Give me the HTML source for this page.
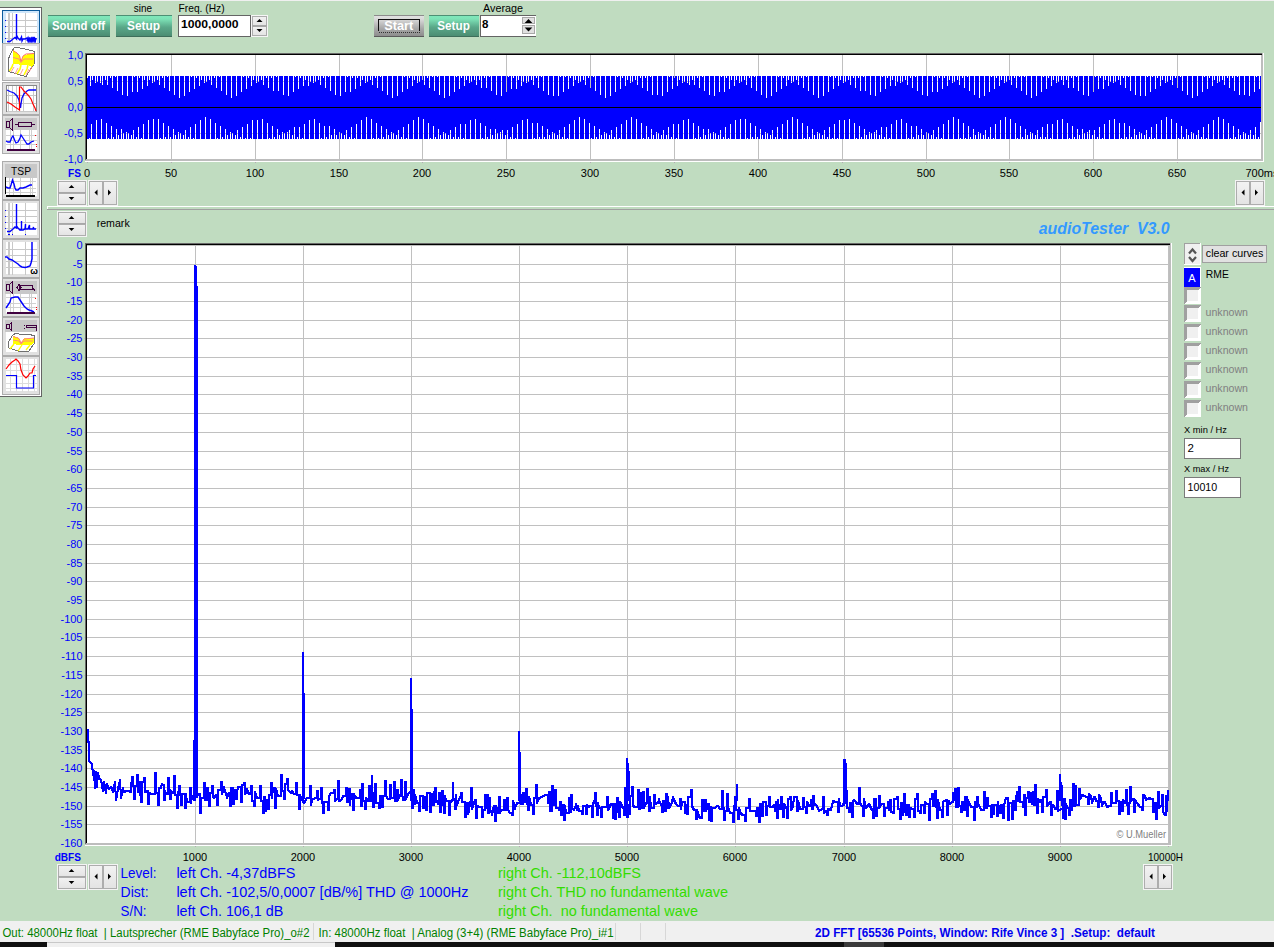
<!DOCTYPE html>
<html><head><meta charset="utf-8"><title>audioTester</title><style>html,body{margin:0;padding:0;background:#C0DCC0;overflow:hidden}svg{display:block}text{font-family:"Liberation Sans",sans-serif}</style></head><body><svg width="1274" height="947" viewBox="0 0 1274 947" shape-rendering="crispEdges" font-family="Liberation Sans, sans-serif">
<defs>
<linearGradient id="gteal" x1="0" y1="0" x2="0" y2="1">
 <stop offset="0" stop-color="#7fe9bb"/><stop offset="0.18" stop-color="#7de2b6"/><stop offset="0.55" stop-color="#5aa889"/><stop offset="1" stop-color="#4a8a70"/>
</linearGradient>
<linearGradient id="ggray" x1="0" y1="0" x2="0" y2="1">
 <stop offset="0" stop-color="#e4e4e4"/><stop offset="0.2" stop-color="#d8d8d8"/><stop offset="0.6" stop-color="#a9a9a9"/><stop offset="1" stop-color="#8a8a8a"/>
</linearGradient>
<linearGradient id="gbtn" x1="0" y1="0" x2="0" y2="1">
 <stop offset="0" stop-color="#f3f3f3"/><stop offset="1" stop-color="#e3e3e3"/>
</linearGradient>
</defs>
<rect x="0" y="0" width="1274" height="947" fill="#C0DCC0"/>
<rect x="0" y="0" width="1274" height="1" fill="#f0f0f0"/>
<rect x="48" y="15" width="62" height="22" fill="url(#gteal)"/>
<rect x="48" y="15" width="62" height="1" fill="#4d8f74"/>
<rect x="48" y="36" width="62" height="1" fill="#3e6e5a"/>
<text x="52" y="30" font-size="12" fill="#fff" font-weight="bold" textLength="53" lengthAdjust="spacingAndGlyphs" xml:space="preserve">Sound off</text>
<rect x="116" y="15" width="56" height="22" fill="url(#gteal)"/>
<rect x="116" y="15" width="56" height="1" fill="#4d8f74"/>
<rect x="116" y="36" width="56" height="1" fill="#3e6e5a"/>
<text x="127" y="30" font-size="12" fill="#fff" font-weight="bold" textLength="33" lengthAdjust="spacingAndGlyphs" xml:space="preserve">Setup</text>
<rect x="429" y="15" width="50" height="22" fill="url(#gteal)"/>
<rect x="429" y="15" width="50" height="1" fill="#4d8f74"/>
<rect x="429" y="36" width="50" height="1" fill="#3e6e5a"/>
<text x="437.3" y="30" font-size="12" fill="#fff" font-weight="bold" textLength="32.5" lengthAdjust="spacingAndGlyphs" xml:space="preserve">Setup</text>
<rect x="374" y="15" width="50" height="22" fill="url(#ggray)"/>
<rect x="374" y="15" width="50" height="1" fill="#8c8c8c"/>
<rect x="374" y="36" width="50" height="1" fill="#5a5a5a"/>
<path d="M378.5 31V19.5H419.5V31" fill="none" stroke="#111" stroke-width="1"/>
<path d="M378.5 32.5H419.5" fill="none" stroke="#333" stroke-width="1" stroke-dasharray="1,1"/>
<text x="384.2" y="30" font-size="12" fill="#fff" font-weight="bold" textLength="29" lengthAdjust="spacingAndGlyphs" xml:space="preserve">Start</text>
<text x="133.8" y="12" font-size="11" fill="#000" textLength="18.2" lengthAdjust="spacingAndGlyphs" xml:space="preserve">sine</text>
<text x="178.6" y="12" font-size="11" fill="#000" textLength="46" lengthAdjust="spacingAndGlyphs" xml:space="preserve">Freq. (Hz)</text>
<text x="483" y="12" font-size="11" fill="#000" textLength="40" lengthAdjust="spacingAndGlyphs" xml:space="preserve">Average</text>
<rect x="178" y="15" width="73" height="22" fill="#fff"/>
<rect x="178" y="15" width="73" height="1" fill="#646464"/>
<rect x="178" y="15" width="1" height="22" fill="#646464"/>
<rect x="178" y="36" width="73" height="1" fill="#646464"/>
<rect x="250" y="15" width="1" height="22" fill="#646464"/>
<text x="181" y="28" font-size="11.5" fill="#000" font-weight="bold" textLength="57.6" lengthAdjust="spacingAndGlyphs" xml:space="preserve">1000,0000</text>
<rect x="251" y="15" width="17" height="22" fill="#f6f6f6"/>
<rect x="252" y="16" width="15" height="10" fill="url(#gbtn)"/>
<rect x="252.5" y="16.5" width="14" height="9" fill="none" stroke="#adadad" stroke-width="1"/>
<rect x="252" y="26" width="15" height="10" fill="url(#gbtn)"/>
<rect x="252.5" y="26.5" width="14" height="9" fill="none" stroke="#adadad" stroke-width="1"/>
<rect x="252" y="25" width="15" height="1" fill="#a8a8a8"/>
<rect x="252" y="26" width="15" height="1" fill="#a8a8a8"/>
<polygon points="256.5,22.0 262.5,22.0 259.5,19.0" fill="#000" shape-rendering="geometricPrecision"/>
<polygon points="256.5,29.0 262.5,29.0 259.5,32.0" fill="#000" shape-rendering="geometricPrecision"/>
<rect x="480" y="15" width="56" height="22" fill="#fff"/>
<rect x="480" y="15" width="56" height="1" fill="#646464"/>
<rect x="480" y="15" width="1" height="22" fill="#646464"/>
<rect x="480" y="36" width="56" height="1" fill="#646464"/>
<rect x="522" y="17" width="13" height="7" fill="#e0e0e0"/>
<rect x="522.5" y="17.5" width="12" height="6" fill="none" stroke="#a8a8a8" stroke-width="1"/>
<rect x="522" y="25" width="13" height="9" fill="#e0e0e0"/>
<rect x="522.5" y="25.5" width="12" height="8" fill="none" stroke="#a8a8a8" stroke-width="1"/>
<polygon points="524.7,22.9 532.3,22.9 528.5,19.1" fill="#000" shape-rendering="geometricPrecision"/>
<polygon points="524.7,27.6 532.3,27.6 528.5,31.4" fill="#000" shape-rendering="geometricPrecision"/>
<text x="482" y="28" font-size="11.5" fill="#000" font-weight="bold" xml:space="preserve">8</text>
<rect x="85" y="53" width="1179" height="109" fill="#fff"/>
<rect x="85" y="53" width="1178" height="1" fill="#696969"/>
<rect x="85" y="53" width="1" height="108" fill="#696969"/>
<rect x="86" y="54" width="1177" height="1" fill="#000"/>
<rect x="86" y="54" width="1" height="107" fill="#000"/>
<rect x="1261" y="55" width="1" height="106" fill="#bdbdbd"/>
<rect x="1262" y="53" width="1" height="108" fill="#bdbdbd"/>
<rect x="86" y="159" width="1177" height="1" fill="#bdbdbd"/>
<rect x="85" y="160" width="1178" height="1" fill="#bdbdbd"/>
<rect x="1263" y="53" width="1" height="109" fill="#fff"/>
<rect x="85" y="161" width="1179" height="1" fill="#fff"/>
<rect x="171" y="55" width="1" height="104" fill="#c0c0c0"/>
<rect x="255" y="55" width="1" height="104" fill="#c0c0c0"/>
<rect x="339" y="55" width="1" height="104" fill="#c0c0c0"/>
<rect x="422" y="55" width="1" height="104" fill="#c0c0c0"/>
<rect x="506" y="55" width="1" height="104" fill="#c0c0c0"/>
<rect x="590" y="55" width="1" height="104" fill="#c0c0c0"/>
<rect x="674" y="55" width="1" height="104" fill="#c0c0c0"/>
<rect x="758" y="55" width="1" height="104" fill="#c0c0c0"/>
<rect x="842" y="55" width="1" height="104" fill="#c0c0c0"/>
<rect x="926" y="55" width="1" height="104" fill="#c0c0c0"/>
<rect x="1009" y="55" width="1" height="104" fill="#c0c0c0"/>
<rect x="1093" y="55" width="1" height="104" fill="#c0c0c0"/>
<rect x="1177" y="55" width="1" height="104" fill="#c0c0c0"/>
<rect x="87" y="81" width="1174" height="1" fill="#c0c0c0"/>
<rect x="87" y="133" width="1174" height="1" fill="#c0c0c0"/>
<path d="M87.5 78V139M88.5 76V139M89.5 76V138M90.5 86V139M91.5 76V124M92.5 80V139M93.5 76V139M94.5 76V139M95.5 83V139M96.5 76V120M97.5 82V139M98.5 76V139M99.5 76V139M100.5 83V139M101.5 76V119M102.5 85V139M103.5 76V139M104.5 76V139M105.5 80V139M106.5 76V123M107.5 85V139M108.5 76V138M109.5 76V139M110.5 78V139M111.5 76V126M112.5 88V139M113.5 76V137M114.5 76V139M115.5 77V139M116.5 76V129M117.5 91V139M118.5 76V135M119.5 76V139M120.5 76V139M121.5 76V129M122.5 95V139M123.5 76V133M124.5 76V139M125.5 76V139M126.5 76V132M127.5 96V139M128.5 76V133M129.5 76V139M130.5 76V139M131.5 76V135M132.5 92V139M133.5 76V130M134.5 77V139M135.5 76V139M136.5 76V137M137.5 92V139M138.5 76V127M139.5 78V139M140.5 76V139M141.5 76V138M142.5 89V139M143.5 76V124M144.5 80V139M145.5 76V139M146.5 76V139M147.5 86V139M148.5 76V120M149.5 80V139M150.5 76V139M151.5 76V139M152.5 83V139M153.5 76V119M154.5 82V139M155.5 76V139M156.5 76V139M157.5 80V139M158.5 76V119M159.5 85V139M160.5 76V138M161.5 76V139M162.5 78V139M163.5 76V123M164.5 88V139M165.5 76V137M166.5 76V139M167.5 77V139M168.5 76V126M169.5 91V139M170.5 76V137M171.5 76V139M172.5 76V139M173.5 76V129M174.5 95V139M175.5 76V135M176.5 76V139M177.5 76V139M178.5 76V132M179.5 98V139M180.5 76V133M181.5 76V139M182.5 76V139M183.5 76V135M184.5 96V139M185.5 76V130M186.5 76V139M187.5 76V139M188.5 76V137M189.5 92V139M190.5 76V127M191.5 77V139M192.5 76V139M193.5 76V138M194.5 89V139M195.5 76V124M196.5 78V139M197.5 76V139M198.5 76V139M199.5 86V139M200.5 76V120M201.5 80V139M202.5 76V139M203.5 76V139M204.5 83V139M205.5 76V117M206.5 82V139M207.5 76V139M208.5 76V139M209.5 80V139M210.5 76V119M211.5 85V139M212.5 76V139M213.5 76V139M214.5 78V139M215.5 76V123M216.5 88V139M217.5 76V138M218.5 76V139M219.5 77V139M220.5 76V126M221.5 91V139M222.5 76V137M223.5 76V139M224.5 76V139M225.5 76V129M226.5 95V139M227.5 76V135M228.5 76V139M229.5 76V139M230.5 76V132M231.5 98V139M232.5 76V133M233.5 76V139M234.5 76V139M235.5 76V135M236.5 96V139M237.5 76V130M238.5 76V139M239.5 76V139M240.5 76V137M241.5 92V139M242.5 76V127M243.5 77V139M244.5 76V139M245.5 76V138M246.5 89V139M247.5 76V124M248.5 78V139M249.5 76V139M250.5 76V138M251.5 86V139M252.5 76V120M253.5 80V139M254.5 76V139M255.5 76V139M256.5 83V139M257.5 76V120M258.5 82V139M259.5 76V139M260.5 76V139M261.5 80V139M262.5 76V119M263.5 85V139M264.5 76V139M265.5 76V139M266.5 78V139M267.5 76V123M268.5 88V139M269.5 76V138M270.5 76V139M271.5 78V139M272.5 76V126M273.5 91V139M274.5 76V137M275.5 76V139M276.5 77V139M277.5 76V129M278.5 91V139M279.5 76V135M280.5 76V139M281.5 76V139M282.5 76V132M283.5 95V139M284.5 76V133M285.5 76V139M286.5 76V139M287.5 76V132M288.5 96V139M289.5 76V130M290.5 76V139M291.5 76V139M292.5 76V135M293.5 92V139M294.5 76V127M295.5 77V139M296.5 76V139M297.5 76V137M298.5 89V139M299.5 76V127M300.5 78V139M301.5 76V139M302.5 76V138M303.5 86V139M304.5 76V124M305.5 80V139M306.5 76V139M307.5 76V139M308.5 86V139M309.5 76V120M310.5 82V139M311.5 76V139M312.5 76V139M313.5 83V139M314.5 76V119M315.5 82V139M316.5 76V139M317.5 76V139M318.5 80V139M319.5 76V123M320.5 85V139M321.5 76V138M322.5 76V139M323.5 78V139M324.5 76V126M325.5 88V139M326.5 76V137M327.5 76V139M328.5 77V139M329.5 76V126M330.5 91V139M331.5 76V135M332.5 76V139M333.5 76V139M334.5 76V129M335.5 95V139M336.5 76V135M337.5 76V139M338.5 76V139M339.5 76V132M340.5 96V139M341.5 76V133M342.5 76V139M343.5 76V139M344.5 76V135M345.5 92V139M346.5 76V130M347.5 77V139M348.5 76V139M349.5 76V137M350.5 92V139M351.5 76V127M352.5 78V139M353.5 76V139M354.5 76V138M355.5 89V139M356.5 76V124M357.5 78V139M358.5 76V139M359.5 76V139M360.5 86V139M361.5 76V120M362.5 80V139M363.5 76V139M364.5 76V139M365.5 83V139M366.5 76V117M367.5 82V139M368.5 76V139M369.5 76V139M370.5 80V139M371.5 76V119M372.5 85V139M373.5 76V138M374.5 76V139M375.5 78V139M376.5 76V123M377.5 88V139M378.5 76V138M379.5 76V139M380.5 77V139M381.5 76V126M382.5 91V139M383.5 76V137M384.5 76V139M385.5 76V139M386.5 76V129M387.5 95V139M388.5 76V135M389.5 76V139M390.5 76V139M391.5 76V132M392.5 98V139M393.5 76V133M394.5 76V139M395.5 76V139M396.5 76V135M397.5 96V139M398.5 76V130M399.5 76V139M400.5 76V139M401.5 76V137M402.5 92V139M403.5 76V127M404.5 77V139M405.5 76V139M406.5 76V138M407.5 89V139M408.5 76V124M409.5 78V139M410.5 76V139M411.5 76V139M412.5 86V139M413.5 76V120M414.5 80V139M415.5 76V139M416.5 76V139M417.5 83V139M418.5 76V117M419.5 82V139M420.5 76V139M421.5 76V139M422.5 80V139M423.5 76V119M424.5 85V139M425.5 76V139M426.5 76V139M427.5 78V139M428.5 76V123M429.5 88V139M430.5 76V138M431.5 76V139M432.5 77V139M433.5 76V126M434.5 91V139M435.5 76V137M436.5 76V139M437.5 77V139M438.5 76V129M439.5 95V139M440.5 76V135M441.5 76V139M442.5 76V139M443.5 76V132M444.5 98V139M445.5 76V133M446.5 76V139M447.5 76V139M448.5 76V135M449.5 96V139M450.5 76V130M451.5 76V139M452.5 76V139M453.5 76V137M454.5 92V139M455.5 76V127M456.5 77V139M457.5 76V139M458.5 76V137M459.5 89V139M460.5 76V124M461.5 78V139M462.5 76V139M463.5 76V138M464.5 86V139M465.5 76V124M466.5 80V139M467.5 76V139M468.5 76V139M469.5 83V139M470.5 76V120M471.5 82V139M472.5 76V139M473.5 76V139M474.5 80V139M475.5 76V119M476.5 85V139M477.5 76V139M478.5 76V139M479.5 80V139M480.5 76V123M481.5 88V139M482.5 76V138M483.5 76V139M484.5 78V139M485.5 76V126M486.5 88V139M487.5 76V137M488.5 76V139M489.5 77V139M490.5 76V129M491.5 91V139M492.5 76V135M493.5 76V139M494.5 76V139M495.5 76V129M496.5 95V139M497.5 76V133M498.5 76V139M499.5 76V139M500.5 76V132M501.5 96V139M502.5 76V130M503.5 76V139M504.5 76V139M505.5 76V135M506.5 92V139M507.5 76V130M508.5 77V139M509.5 76V139M510.5 76V137M511.5 89V139M512.5 76V127M513.5 78V139M514.5 76V139M515.5 76V138M516.5 89V139M517.5 76V124M518.5 80V139M519.5 76V139M520.5 76V139M521.5 86V139M522.5 76V120M523.5 82V139M524.5 76V139M525.5 76V139M526.5 83V139M527.5 76V119M528.5 82V139M529.5 76V139M530.5 76V139M531.5 80V139M532.5 76V123M533.5 85V139M534.5 76V138M535.5 76V139M536.5 78V139M537.5 76V123M538.5 88V139M539.5 76V137M540.5 76V139M541.5 77V139M542.5 76V126M543.5 91V139M544.5 76V137M545.5 76V139M546.5 76V139M547.5 76V129M548.5 95V139M549.5 76V135M550.5 76V139M551.5 76V139M552.5 76V132M553.5 96V139M554.5 76V133M555.5 76V139M556.5 76V139M557.5 76V135M558.5 96V139M559.5 76V130M560.5 77V139M561.5 76V139M562.5 76V137M563.5 92V139M564.5 76V127M565.5 77V139M566.5 76V139M567.5 76V138M568.5 89V139M569.5 76V124M570.5 78V139M571.5 76V139M572.5 76V139M573.5 86V139M574.5 76V120M575.5 80V139M576.5 76V139M577.5 76V139M578.5 83V139M579.5 76V117M580.5 82V139M581.5 76V139M582.5 76V139M583.5 80V139M584.5 76V119M585.5 85V139M586.5 76V139M587.5 76V139M588.5 78V139M589.5 76V123M590.5 88V139M591.5 76V138M592.5 76V139M593.5 77V139M594.5 76V126M595.5 91V139M596.5 76V137M597.5 76V139M598.5 76V139M599.5 76V129M600.5 95V139M601.5 76V135M602.5 76V139M603.5 76V139M604.5 76V132M605.5 98V139M606.5 76V133M607.5 76V139M608.5 76V139M609.5 76V135M610.5 96V139M611.5 76V130M612.5 76V139M613.5 76V139M614.5 76V137M615.5 92V139M616.5 76V127M617.5 77V139M618.5 76V139M619.5 76V138M620.5 89V139M621.5 76V124M622.5 78V139M623.5 76V139M624.5 76V139M625.5 86V139M626.5 76V120M627.5 80V139M628.5 76V139M629.5 76V139M630.5 83V139M631.5 76V117M632.5 82V139M633.5 76V139M634.5 76V139M635.5 80V139M636.5 76V119M637.5 85V139M638.5 76V139M639.5 76V139M640.5 78V139M641.5 76V123M642.5 88V139M643.5 76V138M644.5 76V139M645.5 78V139M646.5 76V126M647.5 91V139M648.5 76V137M649.5 76V139M650.5 77V139M651.5 76V129M652.5 95V139M653.5 76V135M654.5 76V139M655.5 76V139M656.5 76V132M657.5 95V139M658.5 76V133M659.5 76V139M660.5 76V139M661.5 76V135M662.5 96V139M663.5 76V130M664.5 76V139M665.5 76V139M666.5 76V135M667.5 92V139M668.5 76V127M669.5 77V139M670.5 76V139M671.5 76V137M672.5 89V139M673.5 76V124M674.5 78V139M675.5 76V139M676.5 76V138M677.5 86V139M678.5 76V124M679.5 80V139M680.5 76V139M681.5 76V139M682.5 83V139M683.5 76V120M684.5 82V139M685.5 76V139M686.5 76V139M687.5 83V139M688.5 76V119M689.5 85V139M690.5 76V139M691.5 76V139M692.5 80V139M693.5 76V123M694.5 85V139M695.5 76V138M696.5 76V139M697.5 78V139M698.5 76V126M699.5 88V139M700.5 76V137M701.5 76V139M702.5 77V139M703.5 76V129M704.5 91V139M705.5 76V135M706.5 76V139M707.5 76V139M708.5 76V129M709.5 95V139M710.5 76V133M711.5 76V139M712.5 76V139M713.5 76V132M714.5 96V139M715.5 76V133M716.5 76V139M717.5 76V139M718.5 76V135M719.5 92V139M720.5 76V130M721.5 77V139M722.5 76V139M723.5 76V137M724.5 92V139M725.5 76V127M726.5 78V139M727.5 76V139M728.5 76V138M729.5 89V139M730.5 76V124M731.5 80V139M732.5 76V139M733.5 76V139M734.5 86V139M735.5 76V120M736.5 80V139M737.5 76V139M738.5 76V139M739.5 83V139M740.5 76V119M741.5 82V139M742.5 76V139M743.5 76V139M744.5 80V139M745.5 76V119M746.5 85V139M747.5 76V138M748.5 76V139M749.5 78V139M750.5 76V123M751.5 88V139M752.5 76V137M753.5 76V139M754.5 77V139M755.5 76V126M756.5 91V139M757.5 76V137M758.5 76V139M759.5 76V139M760.5 76V129M761.5 95V139M762.5 76V135M763.5 76V139M764.5 76V139M765.5 76V132M766.5 98V139M767.5 76V133M768.5 76V139M769.5 76V139M770.5 76V135M771.5 96V139M772.5 76V130M773.5 76V139M774.5 76V139M775.5 76V137M776.5 92V139M777.5 76V127M778.5 77V139M779.5 76V139M780.5 76V138M781.5 89V139M782.5 76V124M783.5 78V139M784.5 76V139M785.5 76V139M786.5 86V139M787.5 76V120M788.5 80V139M789.5 76V139M790.5 76V139M791.5 83V139M792.5 76V117M793.5 82V139M794.5 76V139M795.5 76V139M796.5 80V139M797.5 76V119M798.5 85V139M799.5 76V139M800.5 76V139M801.5 78V139M802.5 76V123M803.5 88V139M804.5 76V138M805.5 76V139M806.5 77V139M807.5 76V126M808.5 91V139M809.5 76V137M810.5 76V139M811.5 76V139M812.5 76V129M813.5 95V139M814.5 76V135M815.5 76V139M816.5 76V139M817.5 76V132M818.5 98V139M819.5 76V133M820.5 76V139M821.5 76V139M822.5 76V135M823.5 96V139M824.5 76V130M825.5 76V139M826.5 76V139M827.5 76V137M828.5 92V139M829.5 76V127M830.5 77V139M831.5 76V139M832.5 76V138M833.5 89V139M834.5 76V124M835.5 78V139M836.5 76V139M837.5 76V138M838.5 86V139M839.5 76V120M840.5 80V139M841.5 76V139M842.5 76V139M843.5 83V139M844.5 76V120M845.5 82V139M846.5 76V139M847.5 76V139M848.5 80V139M849.5 76V119M850.5 85V139M851.5 76V139M852.5 76V139M853.5 78V139M854.5 76V123M855.5 88V139M856.5 76V138M857.5 76V139M858.5 78V139M859.5 76V126M860.5 91V139M861.5 76V137M862.5 76V139M863.5 77V139M864.5 76V129M865.5 91V139M866.5 76V135M867.5 76V139M868.5 76V139M869.5 76V132M870.5 95V139M871.5 76V133M872.5 76V139M873.5 76V139M874.5 76V132M875.5 96V139M876.5 76V130M877.5 76V139M878.5 76V139M879.5 76V135M880.5 92V139M881.5 76V127M882.5 77V139M883.5 76V139M884.5 76V137M885.5 89V139M886.5 76V127M887.5 78V139M888.5 76V139M889.5 76V138M890.5 86V139M891.5 76V124M892.5 80V139M893.5 76V139M894.5 76V139M895.5 86V139M896.5 76V120M897.5 82V139M898.5 76V139M899.5 76V139M900.5 83V139M901.5 76V119M902.5 82V139M903.5 76V139M904.5 76V139M905.5 80V139M906.5 76V123M907.5 85V139M908.5 76V138M909.5 76V139M910.5 78V139M911.5 76V126M912.5 88V139M913.5 76V137M914.5 76V139M915.5 77V139M916.5 76V126M917.5 91V139M918.5 76V135M919.5 76V139M920.5 76V139M921.5 76V129M922.5 95V139M923.5 76V135M924.5 76V139M925.5 76V139M926.5 76V132M927.5 96V139M928.5 76V133M929.5 76V139M930.5 76V139M931.5 76V135M932.5 92V139M933.5 76V130M934.5 77V139M935.5 76V139M936.5 76V137M937.5 92V139M938.5 76V127M939.5 78V139M940.5 76V139M941.5 76V138M942.5 89V139M943.5 76V124M944.5 78V139M945.5 76V139M946.5 76V139M947.5 86V139M948.5 76V120M949.5 80V139M950.5 76V139M951.5 76V139M952.5 83V139M953.5 76V117M954.5 82V139M955.5 76V139M956.5 76V139M957.5 80V139M958.5 76V119M959.5 85V139M960.5 76V138M961.5 76V139M962.5 78V139M963.5 76V123M964.5 88V139M965.5 76V138M966.5 76V139M967.5 77V139M968.5 76V126M969.5 91V139M970.5 76V137M971.5 76V139M972.5 76V139M973.5 76V129M974.5 95V139M975.5 76V135M976.5 76V139M977.5 76V139M978.5 76V132M979.5 98V139M980.5 76V133M981.5 76V139M982.5 76V139M983.5 76V135M984.5 96V139M985.5 76V130M986.5 76V139M987.5 76V139M988.5 76V137M989.5 92V139M990.5 76V127M991.5 77V139M992.5 76V139M993.5 76V138M994.5 89V139M995.5 76V124M996.5 78V139M997.5 76V139M998.5 76V139M999.5 86V139M1000.5 76V120M1001.5 80V139M1002.5 76V139M1003.5 76V139M1004.5 83V139M1005.5 76V117M1006.5 82V139M1007.5 76V139M1008.5 76V139M1009.5 80V139M1010.5 76V119M1011.5 85V139M1012.5 76V139M1013.5 76V139M1014.5 78V139M1015.5 76V123M1016.5 88V139M1017.5 76V138M1018.5 76V139M1019.5 77V139M1020.5 76V126M1021.5 91V139M1022.5 76V137M1023.5 76V139M1024.5 77V139M1025.5 76V129M1026.5 95V139M1027.5 76V135M1028.5 76V139M1029.5 76V139M1030.5 76V132M1031.5 98V139M1032.5 76V133M1033.5 76V139M1034.5 76V139M1035.5 76V135M1036.5 96V139M1037.5 76V130M1038.5 76V139M1039.5 76V139M1040.5 76V137M1041.5 92V139M1042.5 76V127M1043.5 77V139M1044.5 76V139M1045.5 76V137M1046.5 89V139M1047.5 76V124M1048.5 78V139M1049.5 76V139M1050.5 76V138M1051.5 86V139M1052.5 76V124M1053.5 80V139M1054.5 76V139M1055.5 76V139M1056.5 83V139M1057.5 76V120M1058.5 82V139M1059.5 76V139M1060.5 76V139M1061.5 80V139M1062.5 76V119M1063.5 85V139M1064.5 76V139M1065.5 76V139M1066.5 80V139M1067.5 76V123M1068.5 88V139M1069.5 76V138M1070.5 76V139M1071.5 78V139M1072.5 76V126M1073.5 88V139M1074.5 76V137M1075.5 76V139M1076.5 77V139M1077.5 76V129M1078.5 91V139M1079.5 76V135M1080.5 76V139M1081.5 76V139M1082.5 76V129M1083.5 95V139M1084.5 76V133M1085.5 76V139M1086.5 76V139M1087.5 76V132M1088.5 96V139M1089.5 76V130M1090.5 76V139M1091.5 76V139M1092.5 76V135M1093.5 92V139M1094.5 76V130M1095.5 77V139M1096.5 76V139M1097.5 76V137M1098.5 89V139M1099.5 76V127M1100.5 78V139M1101.5 76V139M1102.5 76V138M1103.5 89V139M1104.5 76V124M1105.5 80V139M1106.5 76V139M1107.5 76V139M1108.5 86V139M1109.5 76V120M1110.5 82V139M1111.5 76V139M1112.5 76V139M1113.5 83V139M1114.5 76V119M1115.5 82V139M1116.5 76V139M1117.5 76V139M1118.5 80V139M1119.5 76V123M1120.5 85V139M1121.5 76V138M1122.5 76V139M1123.5 78V139M1124.5 76V123M1125.5 88V139M1126.5 76V137M1127.5 76V139M1128.5 77V139M1129.5 76V126M1130.5 91V139M1131.5 76V137M1132.5 76V139M1133.5 76V139M1134.5 76V129M1135.5 95V139M1136.5 76V135M1137.5 76V139M1138.5 76V139M1139.5 76V132M1140.5 96V139M1141.5 76V133M1142.5 76V139M1143.5 76V139M1144.5 76V135M1145.5 96V139M1146.5 76V130M1147.5 77V139M1148.5 76V139M1149.5 76V137M1150.5 92V139M1151.5 76V127M1152.5 77V139M1153.5 76V139M1154.5 76V138M1155.5 89V139M1156.5 76V124M1157.5 78V139M1158.5 76V139M1159.5 76V139M1160.5 86V139M1161.5 76V120M1162.5 80V139M1163.5 76V139M1164.5 76V139M1165.5 83V139M1166.5 76V117M1167.5 82V139M1168.5 76V139M1169.5 76V139M1170.5 80V139M1171.5 76V119M1172.5 85V139M1173.5 76V139M1174.5 76V139M1175.5 78V139M1176.5 76V123M1177.5 88V139M1178.5 76V138M1179.5 76V139M1180.5 77V139M1181.5 76V126M1182.5 91V139M1183.5 76V137M1184.5 76V139M1185.5 76V139M1186.5 76V129M1187.5 95V139M1188.5 76V135M1189.5 76V139M1190.5 76V139M1191.5 76V132M1192.5 98V139M1193.5 76V133M1194.5 76V139M1195.5 76V139M1196.5 76V135M1197.5 96V139M1198.5 76V130M1199.5 76V139M1200.5 76V139M1201.5 76V137M1202.5 92V139M1203.5 76V127M1204.5 77V139M1205.5 76V139M1206.5 76V138M1207.5 89V139M1208.5 76V124M1209.5 78V139M1210.5 76V139M1211.5 76V139M1212.5 86V139M1213.5 76V120M1214.5 80V139M1215.5 76V139M1216.5 76V139M1217.5 83V139M1218.5 76V117M1219.5 82V139M1220.5 76V139M1221.5 76V139M1222.5 80V139M1223.5 76V119M1224.5 85V139M1225.5 76V139M1226.5 76V139M1227.5 78V139M1228.5 76V123M1229.5 88V139M1230.5 76V138M1231.5 76V139M1232.5 78V139M1233.5 76V126M1234.5 91V139M1235.5 76V137M1236.5 76V139M1237.5 77V139M1238.5 76V129M1239.5 95V139M1240.5 76V135M1241.5 76V139M1242.5 76V139M1243.5 76V132M1244.5 95V139M1245.5 76V133M1246.5 76V139M1247.5 76V139M1248.5 76V135M1249.5 96V139M1250.5 76V130M1251.5 76V139M1252.5 76V139M1253.5 76V135M1254.5 92V139M1255.5 76V127M1256.5 77V139M1257.5 76V139M1258.5 76V137M1259.5 89V139M1260.5 76V122" stroke="#0000ff" stroke-width="1" fill="none"/>
<rect x="87" y="107" width="1174" height="1" fill="#000"/>
<text x="83" y="59" font-size="11" fill="#0000ff" text-anchor="end" xml:space="preserve">1,0</text>
<text x="83" y="85" font-size="11" fill="#0000ff" text-anchor="end" xml:space="preserve">0,5</text>
<text x="83" y="111" font-size="11" fill="#0000ff" text-anchor="end" xml:space="preserve">0,0</text>
<text x="83" y="137" font-size="11" fill="#0000ff" text-anchor="end" xml:space="preserve">-0,5</text>
<text x="83" y="163" font-size="11" fill="#0000ff" text-anchor="end" xml:space="preserve">-1,0</text>
<text x="68" y="177" font-size="11" fill="#0000ff" font-weight="bold" textLength="13" lengthAdjust="spacingAndGlyphs" xml:space="preserve">FS</text>
<text x="87" y="177" font-size="11" fill="#000" text-anchor="middle" xml:space="preserve">0</text>
<text x="171" y="177" font-size="11" fill="#000" text-anchor="middle" xml:space="preserve">50</text>
<text x="255" y="177" font-size="11" fill="#000" text-anchor="middle" xml:space="preserve">100</text>
<text x="339" y="177" font-size="11" fill="#000" text-anchor="middle" xml:space="preserve">150</text>
<text x="422" y="177" font-size="11" fill="#000" text-anchor="middle" xml:space="preserve">200</text>
<text x="506" y="177" font-size="11" fill="#000" text-anchor="middle" xml:space="preserve">250</text>
<text x="590" y="177" font-size="11" fill="#000" text-anchor="middle" xml:space="preserve">300</text>
<text x="674" y="177" font-size="11" fill="#000" text-anchor="middle" xml:space="preserve">350</text>
<text x="758" y="177" font-size="11" fill="#000" text-anchor="middle" xml:space="preserve">400</text>
<text x="842" y="177" font-size="11" fill="#000" text-anchor="middle" xml:space="preserve">450</text>
<text x="926" y="177" font-size="11" fill="#000" text-anchor="middle" xml:space="preserve">500</text>
<text x="1009" y="177" font-size="11" fill="#000" text-anchor="middle" xml:space="preserve">550</text>
<text x="1093" y="177" font-size="11" fill="#000" text-anchor="middle" xml:space="preserve">600</text>
<text x="1177" y="177" font-size="11" fill="#000" text-anchor="middle" xml:space="preserve">650</text>
<text x="1245.5" y="177" font-size="11" fill="#000" xml:space="preserve">700ms</text>
<rect x="57" y="180" width="30" height="26" fill="#f4f4f4"/>
<rect x="58" y="181" width="28" height="12" fill="url(#gbtn)"/>
<rect x="58.5" y="181.5" width="27" height="11" fill="none" stroke="#adadad" stroke-width="1"/>
<rect x="58" y="193" width="28" height="12" fill="url(#gbtn)"/>
<rect x="58.5" y="193.5" width="27" height="11" fill="none" stroke="#adadad" stroke-width="1"/>
<rect x="58" y="192" width="28" height="1" fill="#a8a8a8"/>
<polygon points="68.7,187.9 74.3,187.9 71.5,185.1" fill="#000" shape-rendering="geometricPrecision"/>
<polygon points="68.7,197.1 74.3,197.1 71.5,199.9" fill="#000" shape-rendering="geometricPrecision"/>
<rect x="88" y="180" width="30" height="26" fill="#f4f4f4"/>
<rect x="89" y="181" width="14" height="24" fill="url(#gbtn)"/>
<rect x="89.5" y="181.5" width="13" height="23" fill="none" stroke="#adadad" stroke-width="1"/>
<rect x="103" y="181" width="14" height="24" fill="url(#gbtn)"/>
<rect x="103.5" y="181.5" width="13" height="23" fill="none" stroke="#adadad" stroke-width="1"/>
<polygon points="97.5,189.5 97.5,195.5 94.5,192.5" fill="#000" shape-rendering="geometricPrecision"/>
<polygon points="108.0,189.5 108.0,195.5 111.0,192.5" fill="#000" shape-rendering="geometricPrecision"/>
<rect x="1235" y="180" width="30" height="26" fill="#f4f4f4"/>
<rect x="1236" y="181" width="14" height="24" fill="url(#gbtn)"/>
<rect x="1236.5" y="181.5" width="13" height="23" fill="none" stroke="#adadad" stroke-width="1"/>
<rect x="1250" y="181" width="14" height="24" fill="url(#gbtn)"/>
<rect x="1250.5" y="181.5" width="13" height="23" fill="none" stroke="#adadad" stroke-width="1"/>
<polygon points="1244.5,189.5 1244.5,195.5 1241.5,192.5" fill="#000" shape-rendering="geometricPrecision"/>
<polygon points="1255.0,189.5 1255.0,195.5 1258.0,192.5" fill="#000" shape-rendering="geometricPrecision"/>
<rect x="47" y="206" width="1227" height="1" fill="#ffffff"/>
<rect x="47" y="206" width="1" height="3" fill="#ffffff"/>
<rect x="47" y="209" width="1227" height="1" fill="#a0a0a0"/>
<rect x="57" y="211" width="30" height="26" fill="#f4f4f4"/>
<rect x="58" y="212" width="28" height="12" fill="url(#gbtn)"/>
<rect x="58.5" y="212.5" width="27" height="11" fill="none" stroke="#adadad" stroke-width="1"/>
<rect x="58" y="224" width="28" height="12" fill="url(#gbtn)"/>
<rect x="58.5" y="224.5" width="27" height="11" fill="none" stroke="#adadad" stroke-width="1"/>
<rect x="58" y="223" width="28" height="1" fill="#a8a8a8"/>
<polygon points="68.7,218.9 74.3,218.9 71.5,216.1" fill="#000" shape-rendering="geometricPrecision"/>
<polygon points="68.7,228.1 74.3,228.1 71.5,230.9" fill="#000" shape-rendering="geometricPrecision"/>
<text x="96.7" y="227" font-size="11" fill="#000" textLength="33" lengthAdjust="spacingAndGlyphs" xml:space="preserve">remark</text>
<text x="1038.8" y="233.6" font-size="16" fill="#3399ff" font-weight="bold" font-style="italic" textLength="130.8" lengthAdjust="spacingAndGlyphs" xml:space="preserve">audioTester  V3.0</text>
<rect x="85" y="243" width="1087" height="603" fill="#fff"/>
<rect x="85" y="243" width="1086" height="1" fill="#696969"/>
<rect x="85" y="243" width="1" height="602" fill="#696969"/>
<rect x="86" y="244" width="1085" height="1" fill="#000"/>
<rect x="86" y="244" width="1" height="601" fill="#000"/>
<rect x="1169" y="245" width="1" height="600" fill="#bdbdbd"/>
<rect x="1170" y="243" width="1" height="602" fill="#bdbdbd"/>
<rect x="86" y="843" width="1085" height="1" fill="#bdbdbd"/>
<rect x="85" y="844" width="1086" height="1" fill="#bdbdbd"/>
<rect x="1171" y="243" width="1" height="603" fill="#fff"/>
<rect x="85" y="845" width="1087" height="1" fill="#fff"/>
<rect x="87" y="245" width="1082" height="1" fill="#c0c0c0"/>
<rect x="87" y="264" width="1082" height="1" fill="#c0c0c0"/>
<rect x="87" y="282" width="1082" height="1" fill="#c0c0c0"/>
<rect x="87" y="301" width="1082" height="1" fill="#c0c0c0"/>
<rect x="87" y="320" width="1082" height="1" fill="#c0c0c0"/>
<rect x="87" y="338" width="1082" height="1" fill="#c0c0c0"/>
<rect x="87" y="357" width="1082" height="1" fill="#c0c0c0"/>
<rect x="87" y="376" width="1082" height="1" fill="#c0c0c0"/>
<rect x="87" y="394" width="1082" height="1" fill="#c0c0c0"/>
<rect x="87" y="413" width="1082" height="1" fill="#c0c0c0"/>
<rect x="87" y="432" width="1082" height="1" fill="#c0c0c0"/>
<rect x="87" y="451" width="1082" height="1" fill="#c0c0c0"/>
<rect x="87" y="469" width="1082" height="1" fill="#c0c0c0"/>
<rect x="87" y="488" width="1082" height="1" fill="#c0c0c0"/>
<rect x="87" y="507" width="1082" height="1" fill="#c0c0c0"/>
<rect x="87" y="525" width="1082" height="1" fill="#c0c0c0"/>
<rect x="87" y="544" width="1082" height="1" fill="#c0c0c0"/>
<rect x="87" y="563" width="1082" height="1" fill="#c0c0c0"/>
<rect x="87" y="581" width="1082" height="1" fill="#c0c0c0"/>
<rect x="87" y="600" width="1082" height="1" fill="#c0c0c0"/>
<rect x="87" y="619" width="1082" height="1" fill="#c0c0c0"/>
<rect x="87" y="637" width="1082" height="1" fill="#c0c0c0"/>
<rect x="87" y="656" width="1082" height="1" fill="#c0c0c0"/>
<rect x="87" y="675" width="1082" height="1" fill="#c0c0c0"/>
<rect x="87" y="694" width="1082" height="1" fill="#c0c0c0"/>
<rect x="87" y="712" width="1082" height="1" fill="#c0c0c0"/>
<rect x="87" y="731" width="1082" height="1" fill="#c0c0c0"/>
<rect x="87" y="750" width="1082" height="1" fill="#c0c0c0"/>
<rect x="87" y="768" width="1082" height="1" fill="#c0c0c0"/>
<rect x="87" y="787" width="1082" height="1" fill="#c0c0c0"/>
<rect x="87" y="806" width="1082" height="1" fill="#c0c0c0"/>
<rect x="87" y="824" width="1082" height="1" fill="#c0c0c0"/>
<rect x="195" y="245" width="1" height="598" fill="#c0c0c0"/>
<rect x="303" y="245" width="1" height="598" fill="#c0c0c0"/>
<rect x="411" y="245" width="1" height="598" fill="#c0c0c0"/>
<rect x="519" y="245" width="1" height="598" fill="#c0c0c0"/>
<rect x="627" y="245" width="1" height="598" fill="#c0c0c0"/>
<rect x="735" y="245" width="1" height="598" fill="#c0c0c0"/>
<rect x="844" y="245" width="1" height="598" fill="#c0c0c0"/>
<rect x="952" y="245" width="1" height="598" fill="#c0c0c0"/>
<rect x="1060" y="245" width="1" height="598" fill="#c0c0c0"/>
<rect x="1168" y="245" width="1" height="598" fill="#c0c0c0"/>
<text x="82.5" y="249" font-size="11" fill="#0000ff" text-anchor="end" xml:space="preserve">0</text>
<text x="82.5" y="268" font-size="11" fill="#0000ff" text-anchor="end" xml:space="preserve">-5</text>
<text x="82.5" y="286" font-size="11" fill="#0000ff" text-anchor="end" xml:space="preserve">-10</text>
<text x="82.5" y="305" font-size="11" fill="#0000ff" text-anchor="end" xml:space="preserve">-15</text>
<text x="82.5" y="324" font-size="11" fill="#0000ff" text-anchor="end" xml:space="preserve">-20</text>
<text x="82.5" y="342" font-size="11" fill="#0000ff" text-anchor="end" xml:space="preserve">-25</text>
<text x="82.5" y="361" font-size="11" fill="#0000ff" text-anchor="end" xml:space="preserve">-30</text>
<text x="82.5" y="380" font-size="11" fill="#0000ff" text-anchor="end" xml:space="preserve">-35</text>
<text x="82.5" y="398" font-size="11" fill="#0000ff" text-anchor="end" xml:space="preserve">-40</text>
<text x="82.5" y="417" font-size="11" fill="#0000ff" text-anchor="end" xml:space="preserve">-45</text>
<text x="82.5" y="436" font-size="11" fill="#0000ff" text-anchor="end" xml:space="preserve">-50</text>
<text x="82.5" y="455" font-size="11" fill="#0000ff" text-anchor="end" xml:space="preserve">-55</text>
<text x="82.5" y="473" font-size="11" fill="#0000ff" text-anchor="end" xml:space="preserve">-60</text>
<text x="82.5" y="492" font-size="11" fill="#0000ff" text-anchor="end" xml:space="preserve">-65</text>
<text x="82.5" y="511" font-size="11" fill="#0000ff" text-anchor="end" xml:space="preserve">-70</text>
<text x="82.5" y="529" font-size="11" fill="#0000ff" text-anchor="end" xml:space="preserve">-75</text>
<text x="82.5" y="548" font-size="11" fill="#0000ff" text-anchor="end" xml:space="preserve">-80</text>
<text x="82.5" y="567" font-size="11" fill="#0000ff" text-anchor="end" xml:space="preserve">-85</text>
<text x="82.5" y="585" font-size="11" fill="#0000ff" text-anchor="end" xml:space="preserve">-90</text>
<text x="82.5" y="604" font-size="11" fill="#0000ff" text-anchor="end" xml:space="preserve">-95</text>
<text x="82.5" y="623" font-size="11" fill="#0000ff" text-anchor="end" xml:space="preserve">-100</text>
<text x="82.5" y="641" font-size="11" fill="#0000ff" text-anchor="end" xml:space="preserve">-105</text>
<text x="82.5" y="660" font-size="11" fill="#0000ff" text-anchor="end" xml:space="preserve">-110</text>
<text x="82.5" y="679" font-size="11" fill="#0000ff" text-anchor="end" xml:space="preserve">-115</text>
<text x="82.5" y="698" font-size="11" fill="#0000ff" text-anchor="end" xml:space="preserve">-120</text>
<text x="82.5" y="716" font-size="11" fill="#0000ff" text-anchor="end" xml:space="preserve">-125</text>
<text x="82.5" y="735" font-size="11" fill="#0000ff" text-anchor="end" xml:space="preserve">-130</text>
<text x="82.5" y="754" font-size="11" fill="#0000ff" text-anchor="end" xml:space="preserve">-135</text>
<text x="82.5" y="772" font-size="11" fill="#0000ff" text-anchor="end" xml:space="preserve">-140</text>
<text x="82.5" y="791" font-size="11" fill="#0000ff" text-anchor="end" xml:space="preserve">-145</text>
<text x="82.5" y="810" font-size="11" fill="#0000ff" text-anchor="end" xml:space="preserve">-150</text>
<text x="82.5" y="828" font-size="11" fill="#0000ff" text-anchor="end" xml:space="preserve">-155</text>
<text x="82.5" y="847" font-size="11" fill="#0000ff" text-anchor="end" xml:space="preserve">-160</text>
<text x="195" y="861" font-size="11" fill="#000" text-anchor="middle" xml:space="preserve">1000</text>
<text x="303" y="861" font-size="11" fill="#000" text-anchor="middle" xml:space="preserve">2000</text>
<text x="411" y="861" font-size="11" fill="#000" text-anchor="middle" xml:space="preserve">3000</text>
<text x="519" y="861" font-size="11" fill="#000" text-anchor="middle" xml:space="preserve">4000</text>
<text x="627" y="861" font-size="11" fill="#000" text-anchor="middle" xml:space="preserve">5000</text>
<text x="735" y="861" font-size="11" fill="#000" text-anchor="middle" xml:space="preserve">6000</text>
<text x="844" y="861" font-size="11" fill="#000" text-anchor="middle" xml:space="preserve">7000</text>
<text x="952" y="861" font-size="11" fill="#000" text-anchor="middle" xml:space="preserve">8000</text>
<text x="1060" y="861" font-size="11" fill="#000" text-anchor="middle" xml:space="preserve">9000</text>
<text x="1148" y="861" font-size="11" fill="#000" textLength="35" lengthAdjust="spacingAndGlyphs" xml:space="preserve">10000H</text>
<text x="54.7" y="861" font-size="11" fill="#0000ff" font-weight="bold" textLength="26.3" lengthAdjust="spacingAndGlyphs" xml:space="preserve">dBFS</text>
<text x="1116.5" y="838" font-size="10.5" fill="#808080" textLength="49.5" lengthAdjust="spacingAndGlyphs" xml:space="preserve">© U.Mueller</text>
<g id="trace"><polyline points="86.5,729.5 87.5,729.5 87.5,741.5 88.5,741.5 88.5,760.5 91.5,763.5 92.5,773.5 93.5,771.5 94.5,787.5 95.5,771.5 96.5,786.5 97.5,772.5 98.5,777.5 100.5,779.5 102.5,790.5 103.5,781.5 105.5,792.5 106.5,783.5 108.5,788.5 110.5,786.5 112.5,790.5 114.5,781.5 115.5,799.5 117.5,788.5 119.5,779.5 120.5,797.5 122.5,788.5 123.5,791.5 126.5,790.5 129.5,790.5 129.5,791.5 130.5,791.5 130.5,782.5 131.5,782.5 131.5,776.5 132.5,776.5 132.5,785.5 133.5,785.5 133.5,798.5 134.5,798.5 134.5,785.5 136.5,785.5 136.5,774.5 137.5,774.5 137.5,791.5 138.5,791.5 138.5,781.5 139.5,781.5 139.5,794.5 140.5,794.5 140.5,801.5 141.5,801.5 141.5,781.5 143.5,781.5 143.5,777.5 144.5,777.5 144.5,791.5 146.5,790.5 147.5,790.5 147.5,803.5 148.5,803.5 148.5,792.5 151.5,793.5 154.5,793.5 154.5,772.5 155.5,772.5 155.5,792.5 156.5,792.5 157.5,792.5 157.5,804.5 158.5,804.5 158.5,787.5 160.5,787.5 161.5,783.5 162.5,784.5 163.5,784.5 163.5,799.5 164.5,799.5 164.5,790.5 165.5,793.5 167.5,793.5 167.5,777.5 168.5,777.5 168.5,789.5 169.5,789.5 169.5,798.5 170.5,798.5 170.5,790.5 171.5,792.5 173.5,792.5 173.5,775.5 174.5,775.5 174.5,794.5 176.5,794.5 176.5,807.5 177.5,807.5 177.5,791.5 178.5,791.5 178.5,785.5 179.5,785.5 179.5,794.5 180.5,794.5 180.5,804.5 181.5,804.5 181.5,793.5 184.5,793.5 184.5,807.5 185.5,807.5 185.5,793.5 186.5,801.5 189.5,801.5 189.5,787.5 190.5,787.5 190.5,802.5 191.5,795.5 193.5,796.5 195.5,796.5 195.5,789.5 196.5,789.5 196.5,796.5 197.5,793.5 199.5,793.5 199.5,812.5 200.5,812.5 200.5,797.5 203.5,797.5 203.5,782.5 204.5,782.5 204.5,799.5 206.5,799.5 206.5,787.5 207.5,787.5 207.5,796.5 208.5,796.5 208.5,805.5 209.5,805.5 209.5,792.5 211.5,792.5 211.5,785.5 212.5,785.5 212.5,796.5 213.5,797.5 215.5,794.5 216.5,794.5 216.5,804.5 217.5,804.5 217.5,789.5 220.5,789.5 220.5,781.5 221.5,781.5 221.5,793.5 223.5,787.5 226.5,796.5 228.5,792.5 229.5,792.5 229.5,805.5 230.5,805.5 230.5,787.5 232.5,787.5 232.5,803.5 233.5,803.5 233.5,789.5 235.5,789.5 235.5,798.5 236.5,798.5 236.5,791.5 237.5,786.5 240.5,786.5 240.5,801.5 241.5,801.5 241.5,784.5 243.5,784.5 243.5,782.5 244.5,782.5 244.5,793.5 246.5,789.5 248.5,793.5 250.5,793.5 250.5,785.5 251.5,785.5 251.5,800.5 253.5,800.5 253.5,805.5 254.5,805.5 254.5,791.5 256.5,797.5 259.5,797.5 259.5,785.5 260.5,785.5 260.5,800.5 262.5,800.5 262.5,812.5 263.5,812.5 263.5,796.5 264.5,796.5 264.5,810.5 265.5,810.5 265.5,799.5 267.5,799.5 267.5,808.5 268.5,808.5 268.5,794.5 270.5,794.5 270.5,782.5 271.5,782.5 271.5,797.5 272.5,787.5 274.5,787.5 274.5,807.5 275.5,807.5 275.5,788.5 276.5,792.5 277.5,795.5 280.5,795.5 280.5,774.5 281.5,774.5 281.5,790.5 283.5,790.5 283.5,798.5 284.5,798.5 284.5,783.5 286.5,783.5 286.5,778.5 287.5,778.5 287.5,789.5 290.5,792.5 291.5,790.5 293.5,793.5 295.5,793.5 295.5,782.5 296.5,782.5 296.5,794.5 298.5,794.5 298.5,808.5 299.5,808.5 299.5,794.5 301.5,799.5 303.5,802.5 306.5,797.5 309.5,797.5 309.5,785.5 310.5,785.5 310.5,804.5 311.5,799.5 314.5,797.5 316.5,797.5 316.5,790.5 317.5,790.5 317.5,799.5 318.5,798.5 320.5,798.5 320.5,787.5 321.5,787.5 321.5,802.5 322.5,802.5 322.5,812.5 323.5,812.5 323.5,801.5 324.5,801.5 327.5,801.5 327.5,809.5 328.5,809.5 328.5,795.5 330.5,792.5 333.5,792.5 333.5,789.5 334.5,789.5 334.5,800.5 336.5,798.5 337.5,798.5 337.5,780.5 338.5,780.5 338.5,800.5 341.5,799.5 342.5,795.5 345.5,795.5 345.5,787.5 346.5,787.5 346.5,801.5 348.5,801.5 348.5,788.5 349.5,788.5 349.5,804.5 350.5,793.5 352.5,793.5 352.5,809.5 353.5,809.5 353.5,793.5 354.5,796.5 356.5,797.5 359.5,797.5 359.5,789.5 360.5,789.5 360.5,805.5 361.5,805.5 361.5,783.5 362.5,783.5 362.5,800.5 364.5,800.5 364.5,808.5 365.5,808.5 365.5,797.5 367.5,800.5 368.5,800.5 368.5,785.5 369.5,785.5 369.5,799.5 371.5,800.5 372.5,800.5 372.5,806.5 373.5,806.5 373.5,792.5 374.5,792.5 374.5,783.5 375.5,783.5 375.5,802.5 378.5,802.5 378.5,807.5 379.5,807.5 379.5,795.5 381.5,795.5 381.5,806.5 382.5,806.5 382.5,795.5 384.5,795.5 384.5,780.5 385.5,780.5 385.5,795.5 387.5,798.5 389.5,798.5 389.5,784.5 390.5,784.5 390.5,797.5 393.5,797.5 393.5,781.5 394.5,781.5 394.5,800.5 396.5,800.5 396.5,789.5 397.5,789.5 397.5,799.5 399.5,794.5 400.5,794.5 400.5,779.5 401.5,779.5 401.5,791.5 402.5,799.5 404.5,799.5 404.5,781.5 405.5,781.5 405.5,798.5 407.5,793.5 409.5,791.5 411.5,791.5 411.5,807.5 412.5,807.5 412.5,789.5 413.5,789.5 413.5,803.5 414.5,803.5 414.5,794.5 416.5,802.5 418.5,802.5 418.5,810.5 419.5,810.5 419.5,795.5 422.5,795.5 422.5,807.5 423.5,807.5 423.5,796.5 425.5,796.5 425.5,809.5 426.5,809.5 426.5,792.5 429.5,792.5 429.5,811.5 430.5,811.5 430.5,793.5 432.5,793.5 432.5,804.5 433.5,804.5 433.5,791.5 434.5,791.5 434.5,787.5 435.5,787.5 435.5,801.5 436.5,800.5 437.5,800.5 437.5,803.5 438.5,803.5 438.5,792.5 439.5,792.5 439.5,811.5 440.5,811.5 440.5,796.5 441.5,796.5 441.5,790.5 442.5,790.5 442.5,804.5 443.5,804.5 443.5,812.5 444.5,812.5 444.5,795.5 445.5,800.5 448.5,800.5 448.5,814.5 449.5,814.5 449.5,802.5 452.5,798.5 454.5,798.5 454.5,808.5 455.5,808.5 455.5,794.5 456.5,804.5 457.5,801.5 459.5,796.5 460.5,796.5 460.5,792.5 461.5,792.5 461.5,801.5 464.5,801.5 464.5,816.5 465.5,816.5 465.5,802.5 466.5,802.5 466.5,813.5 467.5,813.5 467.5,802.5 468.5,811.5 469.5,801.5 470.5,801.5 470.5,787.5 471.5,787.5 471.5,808.5 474.5,799.5 475.5,799.5 475.5,817.5 476.5,817.5 476.5,805.5 478.5,806.5 481.5,806.5 481.5,816.5 482.5,816.5 482.5,809.5 484.5,809.5 484.5,794.5 485.5,794.5 485.5,807.5 486.5,807.5 486.5,794.5 487.5,794.5 487.5,812.5 488.5,812.5 488.5,797.5 489.5,797.5 489.5,808.5 491.5,813.5 493.5,805.5 494.5,805.5 494.5,820.5 495.5,820.5 495.5,805.5 497.5,812.5 498.5,812.5 498.5,796.5 499.5,796.5 499.5,812.5 500.5,809.5 503.5,809.5 503.5,799.5 504.5,799.5 504.5,809.5 506.5,809.5 506.5,797.5 507.5,797.5 507.5,809.5 509.5,812.5 511.5,812.5 511.5,814.5 512.5,814.5 512.5,800.5 514.5,807.5 516.5,802.5 519.5,802.5 519.5,794.5 520.5,794.5 520.5,803.5 522.5,803.5 522.5,792.5 523.5,792.5 523.5,801.5 524.5,801.5 525.5,801.5 525.5,788.5 526.5,788.5 526.5,803.5 527.5,803.5 527.5,809.5 528.5,809.5 528.5,796.5 530.5,804.5 532.5,804.5 532.5,813.5 533.5,813.5 533.5,797.5 535.5,797.5 535.5,784.5 536.5,784.5 536.5,802.5 538.5,797.5 541.5,796.5 544.5,794.5 546.5,794.5 546.5,794.5 547.5,794.5 547.5,802.5 548.5,802.5 548.5,791.5 549.5,791.5 549.5,810.5 551.5,810.5 551.5,785.5 552.5,785.5 552.5,804.5 554.5,804.5 554.5,789.5 555.5,789.5 555.5,807.5 558.5,807.5 558.5,809.5 559.5,809.5 559.5,801.5 560.5,801.5 560.5,814.5 561.5,814.5 561.5,804.5 563.5,804.5 563.5,819.5 564.5,819.5 564.5,805.5 565.5,812.5 568.5,812.5 568.5,797.5 569.5,797.5 569.5,811.5 570.5,811.5 570.5,794.5 571.5,794.5 571.5,807.5 573.5,809.5 575.5,804.5 576.5,809.5 577.5,805.5 578.5,810.5 581.5,810.5 581.5,813.5 582.5,813.5 582.5,805.5 585.5,805.5 585.5,813.5 586.5,813.5 586.5,804.5 587.5,806.5 589.5,805.5 591.5,805.5 591.5,816.5 592.5,816.5 592.5,804.5 593.5,800.5 594.5,800.5 594.5,792.5 595.5,792.5 595.5,805.5 596.5,805.5 596.5,814.5 597.5,814.5 597.5,802.5 598.5,807.5 600.5,807.5 600.5,816.5 601.5,816.5 601.5,806.5 604.5,806.5 606.5,806.5 606.5,796.5 607.5,796.5 607.5,809.5 610.5,803.5 612.5,803.5 612.5,817.5 613.5,817.5 613.5,803.5 614.5,803.5 614.5,818.5 615.5,818.5 615.5,807.5 616.5,807.5 616.5,797.5 617.5,797.5 617.5,811.5 618.5,811.5 618.5,816.5 619.5,816.5 619.5,801.5 622.5,807.5 623.5,807.5 623.5,814.5 624.5,814.5 624.5,802.5 626.5,802.5 626.5,816.5 627.5,816.5 627.5,804.5 628.5,804.5 628.5,813.5 629.5,813.5 629.5,795.5 631.5,795.5 631.5,786.5 632.5,786.5 632.5,805.5 634.5,806.5 636.5,806.5 637.5,806.5 637.5,789.5 638.5,789.5 638.5,808.5 639.5,808.5 639.5,792.5 640.5,792.5 640.5,805.5 641.5,807.5 642.5,807.5 642.5,791.5 643.5,791.5 643.5,807.5 645.5,802.5 646.5,802.5 646.5,788.5 647.5,788.5 647.5,798.5 648.5,798.5 648.5,810.5 649.5,810.5 649.5,796.5 650.5,807.5 653.5,807.5 653.5,794.5 654.5,794.5 654.5,803.5 657.5,802.5 658.5,799.5 660.5,804.5 661.5,804.5 661.5,811.5 662.5,811.5 662.5,800.5 664.5,800.5 664.5,810.5 665.5,810.5 665.5,793.5 666.5,793.5 666.5,807.5 667.5,807.5 667.5,796.5 668.5,807.5 669.5,806.5 671.5,801.5 672.5,797.5 675.5,803.5 677.5,805.5 679.5,805.5 679.5,798.5 680.5,798.5 680.5,808.5 681.5,801.5 684.5,801.5 684.5,812.5 685.5,812.5 685.5,804.5 686.5,804.5 686.5,813.5 687.5,813.5 687.5,796.5 690.5,796.5 690.5,789.5 691.5,789.5 691.5,805.5 693.5,809.5 695.5,809.5 695.5,818.5 696.5,818.5 696.5,809.5 697.5,813.5 699.5,817.5 701.5,817.5 701.5,799.5 702.5,799.5 702.5,810.5 704.5,810.5 704.5,799.5 705.5,799.5 705.5,810.5 707.5,803.5 708.5,803.5 708.5,819.5 709.5,819.5 709.5,806.5 710.5,806.5 710.5,820.5 711.5,820.5 711.5,807.5 714.5,807.5 715.5,806.5 716.5,805.5 717.5,805.5 719.5,808.5 721.5,808.5 721.5,790.5 722.5,790.5 722.5,807.5 723.5,807.5 723.5,819.5 724.5,819.5 724.5,810.5 726.5,810.5 726.5,793.5 727.5,793.5 727.5,806.5 729.5,812.5 732.5,812.5 732.5,821.5 733.5,821.5 733.5,805.5 734.5,805.5 734.5,796.5 735.5,796.5 735.5,809.5 737.5,809.5 737.5,818.5 738.5,818.5 738.5,807.5 740.5,813.5 742.5,814.5 744.5,814.5 744.5,820.5 745.5,820.5 745.5,807.5 748.5,807.5 748.5,798.5 749.5,798.5 749.5,810.5 751.5,810.5 753.5,810.5 755.5,810.5 755.5,815.5 756.5,815.5 756.5,807.5 758.5,807.5 758.5,821.5 759.5,821.5 759.5,803.5 761.5,803.5 761.5,815.5 762.5,815.5 762.5,801.5 764.5,801.5 765.5,801.5 765.5,814.5 766.5,814.5 766.5,805.5 768.5,805.5 768.5,796.5 769.5,796.5 769.5,806.5 772.5,806.5 773.5,804.5 774.5,804.5 774.5,810.5 775.5,810.5 775.5,801.5 776.5,801.5 776.5,817.5 777.5,817.5 777.5,799.5 778.5,808.5 780.5,808.5 780.5,796.5 781.5,796.5 781.5,804.5 782.5,804.5 782.5,816.5 783.5,816.5 783.5,803.5 785.5,807.5 786.5,807.5 786.5,817.5 787.5,817.5 787.5,798.5 789.5,798.5 789.5,796.5 790.5,796.5 790.5,809.5 792.5,805.5 793.5,796.5 796.5,796.5 796.5,810.5 797.5,810.5 797.5,800.5 799.5,808.5 802.5,808.5 802.5,797.5 803.5,797.5 803.5,806.5 805.5,806.5 805.5,812.5 806.5,812.5 806.5,801.5 808.5,805.5 810.5,805.5 810.5,799.5 811.5,799.5 811.5,808.5 812.5,808.5 812.5,795.5 813.5,795.5 813.5,804.5 814.5,803.5 816.5,805.5 818.5,810.5 821.5,808.5 822.5,808.5 822.5,796.5 823.5,796.5 823.5,812.5 824.5,810.5 826.5,810.5 826.5,814.5 827.5,814.5 827.5,808.5 830.5,809.5 831.5,805.5 832.5,800.5 834.5,801.5 837.5,801.5 837.5,811.5 838.5,811.5 838.5,798.5 839.5,805.5 841.5,805.5 843.5,802.5 845.5,802.5 845.5,790.5 846.5,790.5 846.5,807.5 848.5,807.5 848.5,811.5 849.5,811.5 849.5,802.5 851.5,802.5 851.5,816.5 852.5,816.5 852.5,801.5 853.5,799.5 855.5,801.5 856.5,803.5 857.5,803.5 858.5,803.5 858.5,787.5 859.5,787.5 859.5,802.5 861.5,805.5 862.5,805.5 862.5,815.5 863.5,815.5 863.5,798.5 865.5,807.5 868.5,803.5 871.5,809.5 872.5,809.5 872.5,817.5 873.5,817.5 873.5,798.5 875.5,798.5 875.5,815.5 876.5,815.5 876.5,807.5 878.5,807.5 878.5,795.5 879.5,795.5 879.5,806.5 880.5,803.5 883.5,803.5 883.5,815.5 884.5,815.5 884.5,807.5 887.5,807.5 887.5,801.5 888.5,801.5 888.5,809.5 889.5,809.5 889.5,799.5 890.5,799.5 890.5,811.5 892.5,811.5 892.5,812.5 893.5,812.5 893.5,798.5 896.5,798.5 896.5,796.5 897.5,796.5 897.5,808.5 899.5,808.5 899.5,818.5 900.5,818.5 900.5,802.5 901.5,802.5 901.5,814.5 902.5,814.5 902.5,803.5 903.5,803.5 903.5,793.5 904.5,793.5 904.5,811.5 905.5,811.5 905.5,814.5 906.5,814.5 906.5,804.5 908.5,804.5 908.5,816.5 909.5,816.5 909.5,807.5 912.5,808.5 913.5,808.5 913.5,816.5 914.5,816.5 914.5,798.5 916.5,798.5 916.5,793.5 917.5,793.5 917.5,810.5 919.5,810.5 919.5,812.5 920.5,812.5 920.5,804.5 923.5,804.5 923.5,812.5 924.5,812.5 924.5,801.5 926.5,803.5 928.5,803.5 928.5,819.5 929.5,819.5 929.5,798.5 931.5,798.5 931.5,793.5 932.5,793.5 932.5,805.5 934.5,805.5 934.5,790.5 935.5,790.5 935.5,806.5 936.5,806.5 936.5,817.5 937.5,817.5 937.5,799.5 939.5,809.5 941.5,809.5 941.5,816.5 942.5,816.5 942.5,801.5 945.5,799.5 946.5,799.5 946.5,814.5 947.5,814.5 947.5,800.5 948.5,800.5 949.5,803.5 951.5,801.5 952.5,801.5 952.5,792.5 953.5,792.5 953.5,799.5 954.5,799.5 954.5,788.5 955.5,788.5 955.5,806.5 957.5,806.5 957.5,787.5 958.5,787.5 958.5,805.5 960.5,805.5 960.5,811.5 961.5,811.5 961.5,801.5 963.5,801.5 963.5,809.5 964.5,809.5 964.5,796.5 966.5,796.5 966.5,815.5 967.5,815.5 967.5,799.5 970.5,806.5 973.5,806.5 973.5,819.5 974.5,819.5 974.5,801.5 975.5,806.5 976.5,806.5 976.5,796.5 977.5,796.5 977.5,803.5 978.5,804.5 980.5,809.5 983.5,809.5 983.5,791.5 984.5,791.5 984.5,807.5 986.5,807.5 986.5,797.5 987.5,797.5 987.5,805.5 990.5,805.5 990.5,816.5 991.5,816.5 991.5,804.5 992.5,804.5 992.5,813.5 993.5,813.5 993.5,804.5 996.5,804.5 996.5,815.5 997.5,815.5 997.5,801.5 998.5,807.5 999.5,807.5 999.5,812.5 1000.5,812.5 1000.5,804.5 1002.5,804.5 1002.5,817.5 1003.5,817.5 1003.5,804.5 1005.5,797.5 1007.5,797.5 1007.5,819.5 1008.5,819.5 1008.5,802.5 1011.5,802.5 1011.5,818.5 1012.5,818.5 1012.5,800.5 1014.5,800.5 1014.5,809.5 1015.5,809.5 1015.5,795.5 1016.5,795.5 1016.5,791.5 1017.5,791.5 1017.5,800.5 1018.5,800.5 1018.5,786.5 1019.5,786.5 1019.5,801.5 1022.5,801.5 1022.5,806.5 1023.5,806.5 1023.5,794.5 1024.5,794.5 1024.5,814.5 1025.5,814.5 1025.5,797.5 1027.5,797.5 1027.5,791.5 1028.5,791.5 1028.5,801.5 1030.5,801.5 1030.5,792.5 1031.5,792.5 1031.5,803.5 1032.5,803.5 1032.5,791.5 1033.5,791.5 1033.5,804.5 1034.5,804.5 1034.5,784.5 1035.5,784.5 1035.5,799.5 1036.5,799.5 1036.5,812.5 1037.5,812.5 1037.5,798.5 1039.5,801.5 1040.5,799.5 1041.5,799.5 1041.5,811.5 1042.5,811.5 1042.5,796.5 1045.5,796.5 1045.5,789.5 1046.5,789.5 1046.5,805.5 1049.5,801.5 1050.5,801.5 1050.5,814.5 1051.5,814.5 1051.5,804.5 1052.5,804.5 1053.5,805.5 1054.5,808.5 1056.5,808.5 1056.5,790.5 1057.5,790.5 1057.5,810.5 1060.5,808.5 1062.5,808.5 1062.5,817.5 1063.5,817.5 1063.5,798.5 1064.5,798.5 1064.5,818.5 1065.5,818.5 1065.5,803.5 1066.5,807.5 1068.5,807.5 1068.5,814.5 1069.5,814.5 1069.5,799.5 1070.5,799.5 1070.5,809.5 1071.5,809.5 1071.5,802.5 1072.5,802.5 1072.5,783.5 1073.5,783.5 1073.5,805.5 1074.5,805.5 1074.5,785.5 1075.5,785.5 1075.5,804.5 1078.5,804.5 1078.5,788.5 1079.5,788.5 1079.5,798.5 1081.5,794.5 1084.5,795.5 1085.5,796.5 1087.5,796.5 1087.5,803.5 1088.5,803.5 1088.5,793.5 1090.5,795.5 1091.5,802.5 1093.5,796.5 1094.5,796.5 1095.5,800.5 1097.5,800.5 1097.5,806.5 1098.5,806.5 1098.5,794.5 1100.5,797.5 1101.5,805.5 1102.5,801.5 1104.5,801.5 1106.5,806.5 1109.5,805.5 1110.5,805.5 1110.5,792.5 1111.5,792.5 1111.5,802.5 1114.5,802.5 1115.5,802.5 1115.5,790.5 1116.5,790.5 1116.5,800.5 1118.5,800.5 1118.5,813.5 1119.5,813.5 1119.5,801.5 1121.5,801.5 1121.5,810.5 1122.5,810.5 1122.5,799.5 1124.5,802.5 1125.5,802.5 1125.5,789.5 1126.5,789.5 1126.5,804.5 1127.5,804.5 1127.5,813.5 1128.5,813.5 1128.5,802.5 1129.5,802.5 1129.5,786.5 1130.5,786.5 1130.5,800.5 1131.5,798.5 1133.5,798.5 1133.5,811.5 1134.5,811.5 1134.5,799.5 1136.5,802.5 1139.5,806.5 1141.5,806.5 1141.5,809.5 1142.5,809.5 1142.5,794.5 1144.5,795.5 1145.5,799.5 1148.5,797.5 1150.5,798.5 1152.5,798.5 1152.5,811.5 1153.5,811.5 1153.5,802.5 1155.5,802.5 1155.5,818.5 1156.5,818.5 1156.5,805.5 1157.5,805.5 1157.5,791.5 1158.5,791.5 1158.5,807.5 1160.5,805.5 1161.5,805.5 1161.5,794.5 1162.5,794.5 1162.5,811.5 1164.5,814.5 1165.5,814.5 1165.5,795.5 1166.5,795.5 1166.5,810.5 1167.5,790.5" fill="none" stroke="#0000ff" stroke-width="1"/></g>
<use href="#trace" x="1" y="0"/><use href="#trace" x="0" y="1"/><use href="#trace" x="1" y="1"/>
<rect x="193" y="740" width="1" height="61" fill="#0000ff"/>
<rect x="194" y="265" width="1" height="536" fill="#0000ff"/>
<rect x="195" y="265" width="1" height="536" fill="#0000ff"/>
<rect x="196" y="266" width="1" height="530" fill="#0000ff"/>
<rect x="197" y="286" width="1" height="507" fill="#0000ff"/>
<rect x="302" y="652" width="1" height="149" fill="#0000ff"/>
<rect x="303" y="652" width="1" height="149" fill="#0000ff"/>
<rect x="304" y="693" width="1" height="106" fill="#0000ff"/>
<rect x="410" y="678" width="1" height="123" fill="#0000ff"/>
<rect x="411" y="678" width="1" height="123" fill="#0000ff"/>
<rect x="412" y="709" width="1" height="90" fill="#0000ff"/>
<rect x="518" y="731" width="1" height="70" fill="#0000ff"/>
<rect x="519" y="731" width="1" height="70" fill="#0000ff"/>
<rect x="520" y="752" width="1" height="47" fill="#0000ff"/>
<rect x="624" y="787" width="1" height="19" fill="#0000ff"/>
<rect x="625" y="787" width="1" height="19" fill="#0000ff"/>
<rect x="626" y="758" width="1" height="48" fill="#0000ff"/>
<rect x="627" y="758" width="1" height="48" fill="#0000ff"/>
<rect x="628" y="763" width="1" height="38" fill="#0000ff"/>
<rect x="629" y="771" width="1" height="30" fill="#0000ff"/>
<rect x="736" y="784" width="1" height="17" fill="#0000ff"/>
<rect x="737" y="784" width="1" height="17" fill="#0000ff"/>
<rect x="843" y="759" width="1" height="47" fill="#0000ff"/>
<rect x="844" y="759" width="1" height="47" fill="#0000ff"/>
<rect x="845" y="759" width="1" height="42" fill="#0000ff"/>
<rect x="846" y="763" width="1" height="38" fill="#0000ff"/>
<rect x="1059" y="774" width="1" height="27" fill="#0000ff"/>
<rect x="1060" y="774" width="1" height="27" fill="#0000ff"/>
<rect x="1061" y="782" width="1" height="24" fill="#0000ff"/>
<rect x="1062" y="785" width="1" height="32" fill="#0000ff"/>
<rect x="1063" y="800" width="1" height="17" fill="#0000ff"/>
<rect x="452" y="782" width="1" height="19" fill="#0000ff"/>
<rect x="453" y="782" width="1" height="19" fill="#0000ff"/>
<rect x="371" y="775" width="1" height="26" fill="#0000ff"/>
<rect x="372" y="775" width="1" height="26" fill="#0000ff"/>
<rect x="1184" y="243" width="17" height="22" fill="#f0f0f0"/>
<rect x="1184" y="243" width="1" height="22" fill="#a0a0a0"/>
<rect x="1184" y="243" width="17" height="1" fill="#a0a0a0"/>
<rect x="1200" y="243" width="1" height="22" fill="#fff"/>
<rect x="1184" y="264" width="17" height="1" fill="#fff"/>
<path d="M1189 253.5 L1192.5 249.5 L1196 253.5 M1189 257 L1192.5 261 L1196 257" stroke="#555" stroke-width="2.2" fill="none" shape-rendering="geometricPrecision"/>
<rect x="1202" y="245" width="65" height="18" fill="#e1e1e1"/>
<rect x="1202.5" y="245.5" width="64" height="17" fill="none" stroke="#a0a0a0" stroke-width="1"/>
<text x="1205.8" y="257.3" font-size="11" fill="#000" textLength="57.5" lengthAdjust="spacingAndGlyphs" xml:space="preserve">clear curves</text>
<rect x="1184" y="267" width="17" height="20" fill="#ffffff"/>
<rect x="1184" y="268" width="16" height="19" fill="#0000ff"/>
<text x="1192" y="282" font-size="11" fill="#fff" text-anchor="middle" xml:space="preserve">A</text>
<text x="1205.8" y="278" font-size="11" fill="#000" textLength="23" lengthAdjust="spacingAndGlyphs" xml:space="preserve">RME</text>
<rect x="1184" y="287" width="17" height="17" fill="#ffffff"/>
<polygon points="1184,287 1201,287 1198,290 1187,290 1187,301 1184,304" fill="#a0a0a0"/>
<rect x="1187" y="290" width="11" height="11" fill="#f0f0f0"/>
<rect x="1184" y="305" width="17" height="17" fill="#ffffff"/>
<polygon points="1184,305 1201,305 1198,308 1187,308 1187,319 1184,322" fill="#a0a0a0"/>
<rect x="1187" y="308" width="11" height="11" fill="#f0f0f0"/>
<text x="1205.6" y="315.7" font-size="11" fill="#808080" textLength="42.4" lengthAdjust="spacingAndGlyphs" xml:space="preserve">unknown</text>
<rect x="1184" y="324" width="17" height="17" fill="#ffffff"/>
<polygon points="1184,324 1201,324 1198,327 1187,327 1187,338 1184,341" fill="#a0a0a0"/>
<rect x="1187" y="327" width="11" height="11" fill="#f0f0f0"/>
<text x="1205.6" y="334.7" font-size="11" fill="#808080" textLength="42.4" lengthAdjust="spacingAndGlyphs" xml:space="preserve">unknown</text>
<rect x="1184" y="343" width="17" height="17" fill="#ffffff"/>
<polygon points="1184,343 1201,343 1198,346 1187,346 1187,357 1184,360" fill="#a0a0a0"/>
<rect x="1187" y="346" width="11" height="11" fill="#f0f0f0"/>
<text x="1205.6" y="353.7" font-size="11" fill="#808080" textLength="42.4" lengthAdjust="spacingAndGlyphs" xml:space="preserve">unknown</text>
<rect x="1184" y="362" width="17" height="17" fill="#ffffff"/>
<polygon points="1184,362 1201,362 1198,365 1187,365 1187,376 1184,379" fill="#a0a0a0"/>
<rect x="1187" y="365" width="11" height="11" fill="#f0f0f0"/>
<text x="1205.6" y="372.7" font-size="11" fill="#808080" textLength="42.4" lengthAdjust="spacingAndGlyphs" xml:space="preserve">unknown</text>
<rect x="1184" y="381" width="17" height="17" fill="#ffffff"/>
<polygon points="1184,381 1201,381 1198,384 1187,384 1187,395 1184,398" fill="#a0a0a0"/>
<rect x="1187" y="384" width="11" height="11" fill="#f0f0f0"/>
<text x="1205.6" y="391.7" font-size="11" fill="#808080" textLength="42.4" lengthAdjust="spacingAndGlyphs" xml:space="preserve">unknown</text>
<rect x="1184" y="400" width="17" height="17" fill="#ffffff"/>
<polygon points="1184,400 1201,400 1198,403 1187,403 1187,414 1184,417" fill="#a0a0a0"/>
<rect x="1187" y="403" width="11" height="11" fill="#f0f0f0"/>
<text x="1205.6" y="410.7" font-size="11" fill="#808080" textLength="42.4" lengthAdjust="spacingAndGlyphs" xml:space="preserve">unknown</text>
<text x="1184" y="433" font-size="9" fill="#000" textLength="43" lengthAdjust="spacingAndGlyphs" xml:space="preserve">X min / Hz</text>
<text x="1184" y="471.5" font-size="9" fill="#000" textLength="45" lengthAdjust="spacingAndGlyphs" xml:space="preserve">X max / Hz</text>
<rect x="1184" y="438" width="57" height="21" fill="#fff"/>
<rect x="1184.5" y="438.5" width="56" height="20" fill="none" stroke="#7a7a7a" stroke-width="1"/>
<text x="1187.6" y="452" font-size="11.5" fill="#000" xml:space="preserve">2</text>
<rect x="1184" y="477" width="57" height="21" fill="#fff"/>
<rect x="1184.5" y="477.5" width="56" height="20" fill="none" stroke="#7a7a7a" stroke-width="1"/>
<text x="1187.6" y="491" font-size="11.5" fill="#000" textLength="29.6" lengthAdjust="spacingAndGlyphs" xml:space="preserve">10010</text>
<rect x="57" y="864" width="30" height="26" fill="#f4f4f4"/>
<rect x="58" y="865" width="28" height="12" fill="url(#gbtn)"/>
<rect x="58.5" y="865.5" width="27" height="11" fill="none" stroke="#adadad" stroke-width="1"/>
<rect x="58" y="877" width="28" height="12" fill="url(#gbtn)"/>
<rect x="58.5" y="877.5" width="27" height="11" fill="none" stroke="#adadad" stroke-width="1"/>
<rect x="58" y="876" width="28" height="1" fill="#a8a8a8"/>
<polygon points="68.7,871.9 74.3,871.9 71.5,869.1" fill="#000" shape-rendering="geometricPrecision"/>
<polygon points="68.7,881.1 74.3,881.1 71.5,883.9" fill="#000" shape-rendering="geometricPrecision"/>
<rect x="88" y="864" width="30" height="26" fill="#f4f4f4"/>
<rect x="89" y="865" width="14" height="24" fill="url(#gbtn)"/>
<rect x="89.5" y="865.5" width="13" height="23" fill="none" stroke="#adadad" stroke-width="1"/>
<rect x="103" y="865" width="14" height="24" fill="url(#gbtn)"/>
<rect x="103.5" y="865.5" width="13" height="23" fill="none" stroke="#adadad" stroke-width="1"/>
<polygon points="97.5,873.5 97.5,879.5 94.5,876.5" fill="#000" shape-rendering="geometricPrecision"/>
<polygon points="108.0,873.5 108.0,879.5 111.0,876.5" fill="#000" shape-rendering="geometricPrecision"/>
<rect x="1143" y="864" width="30" height="26" fill="#f4f4f4"/>
<rect x="1144" y="865" width="14" height="24" fill="url(#gbtn)"/>
<rect x="1144.5" y="865.5" width="13" height="23" fill="none" stroke="#adadad" stroke-width="1"/>
<rect x="1158" y="865" width="14" height="24" fill="url(#gbtn)"/>
<rect x="1158.5" y="865.5" width="13" height="23" fill="none" stroke="#adadad" stroke-width="1"/>
<polygon points="1152.5,873.5 1152.5,879.5 1149.5,876.5" fill="#000" shape-rendering="geometricPrecision"/>
<polygon points="1163.0,873.5 1163.0,879.5 1166.0,876.5" fill="#000" shape-rendering="geometricPrecision"/>
<text x="120.6" y="878" font-size="15" fill="#0000ff" textLength="36" lengthAdjust="spacingAndGlyphs" xml:space="preserve">Level:</text>
<text x="176.4" y="878" font-size="15" fill="#0000ff" textLength="119" lengthAdjust="spacingAndGlyphs" xml:space="preserve">left Ch. -4,37dBFS</text>
<text x="498" y="878" font-size="15" fill="#33dd00" textLength="143" lengthAdjust="spacingAndGlyphs" xml:space="preserve">right Ch. -112,10dBFS</text>
<text x="120.6" y="897" font-size="15" fill="#0000ff" textLength="28" lengthAdjust="spacingAndGlyphs" xml:space="preserve">Dist:</text>
<text x="176.4" y="897" font-size="15" fill="#0000ff" textLength="292" lengthAdjust="spacingAndGlyphs" xml:space="preserve">left Ch. -102,5/0,0007 [dB/%] THD @ 1000Hz</text>
<text x="498" y="897" font-size="15" fill="#33dd00" textLength="230" lengthAdjust="spacingAndGlyphs" xml:space="preserve">right Ch. THD no fundamental wave</text>
<text x="120.6" y="916" font-size="15" fill="#0000ff" textLength="26" lengthAdjust="spacingAndGlyphs" xml:space="preserve">S/N:</text>
<text x="176.4" y="916" font-size="15" fill="#0000ff" textLength="107" lengthAdjust="spacingAndGlyphs" xml:space="preserve">left Ch. 106,1 dB</text>
<text x="498" y="916" font-size="15" fill="#33dd00" textLength="200" lengthAdjust="spacingAndGlyphs" xml:space="preserve">right Ch.  no fundamental wave</text>
<rect x="0" y="921" width="1274" height="21" fill="#f0f0f0"/>
<rect x="313" y="923" width="1" height="17" fill="#d7d7d7"/>
<rect x="615" y="923" width="1" height="17" fill="#d7d7d7"/>
<rect x="640" y="923" width="1" height="17" fill="#d7d7d7"/>
<rect x="665" y="923" width="1" height="17" fill="#d7d7d7"/>
<text x="2.5" y="937" font-size="12" fill="#008000" textLength="307" lengthAdjust="spacingAndGlyphs" xml:space="preserve">Out: 48000Hz float  | Lautsprecher (RME Babyface Pro)_o#2</text>
<text x="318.6" y="937" font-size="12" fill="#008000" textLength="295" lengthAdjust="spacingAndGlyphs" xml:space="preserve">In: 48000Hz float  | Analog (3+4) (RME Babyface Pro)_i#1</text>
<text x="815" y="937" font-size="12" fill="#0000ee" font-weight="bold" textLength="340" lengthAdjust="spacingAndGlyphs" xml:space="preserve">2D FFT [65536 Points, Window: Rife Vince 3 ]  .Setup:  default</text>
<rect x="0" y="942" width="1274" height="5" fill="#101010"/>
<rect x="47" y="942" width="288" height="5" fill="#f0f0f0"/>
<rect x="47" y="942" width="288" height="1" fill="#c8c8c8"/>
<rect x="844" y="942" width="40" height="5" fill="#3a3a3a"/>
<rect x="195" y="846" width="1" height="1" fill="#b4a8b4"/>
<rect x="303" y="846" width="1" height="1" fill="#b4a8b4"/>
<rect x="411" y="846" width="1" height="1" fill="#b4a8b4"/>
<rect x="519" y="846" width="1" height="1" fill="#b4a8b4"/>
<rect x="627" y="846" width="1" height="1" fill="#b4a8b4"/>
<rect x="735" y="846" width="1" height="1" fill="#b4a8b4"/>
<rect x="844" y="846" width="1" height="1" fill="#b4a8b4"/>
<rect x="952" y="846" width="1" height="1" fill="#b4a8b4"/>
<rect x="1060" y="846" width="1" height="1" fill="#b4a8b4"/>
<rect x="1168" y="846" width="1" height="1" fill="#b4a8b4"/>
<rect x="87" y="162" width="1" height="1" fill="#b4a8b4"/>
<rect x="171" y="162" width="1" height="1" fill="#b4a8b4"/>
<rect x="255" y="162" width="1" height="1" fill="#b4a8b4"/>
<rect x="339" y="162" width="1" height="1" fill="#b4a8b4"/>
<rect x="422" y="162" width="1" height="1" fill="#b4a8b4"/>
<rect x="506" y="162" width="1" height="1" fill="#b4a8b4"/>
<rect x="590" y="162" width="1" height="1" fill="#b4a8b4"/>
<rect x="674" y="162" width="1" height="1" fill="#b4a8b4"/>
<rect x="758" y="162" width="1" height="1" fill="#b4a8b4"/>
<rect x="842" y="162" width="1" height="1" fill="#b4a8b4"/>
<rect x="926" y="162" width="1" height="1" fill="#b4a8b4"/>
<rect x="1009" y="162" width="1" height="1" fill="#b4a8b4"/>
<rect x="1093" y="162" width="1" height="1" fill="#b4a8b4"/>
<rect x="1177" y="162" width="1" height="1" fill="#b4a8b4"/>
<rect x="84" y="264" width="1" height="1" fill="#c4b8c4"/>
<rect x="84" y="282" width="1" height="1" fill="#c4b8c4"/>
<rect x="84" y="301" width="1" height="1" fill="#c4b8c4"/>
<rect x="84" y="320" width="1" height="1" fill="#c4b8c4"/>
<rect x="84" y="338" width="1" height="1" fill="#c4b8c4"/>
<rect x="84" y="357" width="1" height="1" fill="#c4b8c4"/>
<rect x="84" y="376" width="1" height="1" fill="#c4b8c4"/>
<rect x="84" y="394" width="1" height="1" fill="#c4b8c4"/>
<rect x="84" y="413" width="1" height="1" fill="#c4b8c4"/>
<rect x="84" y="432" width="1" height="1" fill="#c4b8c4"/>
<rect x="84" y="451" width="1" height="1" fill="#c4b8c4"/>
<rect x="84" y="469" width="1" height="1" fill="#c4b8c4"/>
<rect x="84" y="488" width="1" height="1" fill="#c4b8c4"/>
<rect x="84" y="507" width="1" height="1" fill="#c4b8c4"/>
<rect x="84" y="525" width="1" height="1" fill="#c4b8c4"/>
<rect x="84" y="544" width="1" height="1" fill="#c4b8c4"/>
<rect x="84" y="563" width="1" height="1" fill="#c4b8c4"/>
<rect x="84" y="581" width="1" height="1" fill="#c4b8c4"/>
<rect x="84" y="600" width="1" height="1" fill="#c4b8c4"/>
<rect x="84" y="619" width="1" height="1" fill="#c4b8c4"/>
<rect x="84" y="637" width="1" height="1" fill="#c4b8c4"/>
<rect x="84" y="656" width="1" height="1" fill="#c4b8c4"/>
<rect x="84" y="675" width="1" height="1" fill="#c4b8c4"/>
<rect x="84" y="694" width="1" height="1" fill="#c4b8c4"/>
<rect x="84" y="712" width="1" height="1" fill="#c4b8c4"/>
<rect x="84" y="731" width="1" height="1" fill="#c4b8c4"/>
<rect x="84" y="750" width="1" height="1" fill="#c4b8c4"/>
<rect x="84" y="768" width="1" height="1" fill="#c4b8c4"/>
<rect x="84" y="787" width="1" height="1" fill="#c4b8c4"/>
<rect x="84" y="806" width="1" height="1" fill="#c4b8c4"/>
<rect x="84" y="824" width="1" height="1" fill="#c4b8c4"/>
<rect x="0" y="7" width="42" height="390" fill="#ffffff"/>
<rect x="0" y="7" width="42" height="1" fill="#646464"/>
<rect x="41" y="7" width="1" height="390" fill="#646464"/>
<rect x="0" y="396" width="42" height="1" fill="#646464"/>
<rect x="2" y="10" width="38" height="34" fill="#0a5a9c"/>
<rect x="3" y="11" width="36" height="33" fill="#cfe6fa"/>
<rect x="6" y="13" width="31" height="31" fill="#ffffff"/>
<rect x="8" y="13" width="1" height="31" fill="#c8c8c8"/>
<rect x="9" y="13" width="1" height="31" fill="#c8c8c8"/>
<rect x="12" y="13" width="1" height="31" fill="#c8c8c8"/>
<rect x="25" y="13" width="1" height="31" fill="#c8c8c8"/>
<rect x="6" y="20" width="31" height="1" fill="#c8c8c8"/>
<rect x="6" y="26" width="31" height="1" fill="#c8c8c8"/>
<rect x="6" y="32" width="31" height="1" fill="#c8c8c8"/>
<rect x="6" y="38" width="31" height="1" fill="#c8c8c8"/>
<rect x="5" y="20" width="1" height="1" fill="#0000ff"/>
<rect x="5" y="26" width="1" height="1" fill="#0000ff"/>
<rect x="5" y="32" width="1" height="1" fill="#0000ff"/>
<rect x="5" y="38" width="1" height="1" fill="#0000ff"/>
<polyline points="7,41.5 10,41.5 13,39 15,37.5 16.5,39 16.5,14 16.5,35 18,38 20,40 21.5,37 22,41 23,39 25,39 27,38 28,41 29,38 31,41 32,37 33,41 34,37 35,41 36,38" fill="none" stroke="#0000ff" stroke-width="1.4" shape-rendering="geometricPrecision"/>
<polyline points="27,41 28,38 29,42.5 30,37.5 31,42.5 32,38 33,42.5 34,37 35,42.5 36,38" fill="none" stroke="#0000ff" stroke-width="1.3" shape-rendering="geometricPrecision"/>
<rect x="2" y="43" width="38" height="38" fill="#acacac"/>
<rect x="3" y="44" width="36" height="36" fill="#e1e1e1"/>
<rect x="6" y="46" width="31" height="31" fill="#ffffff"/>
<polygon points="14.5,47.5 17.5,47.5 23,48.5 29,50 34.5,51.5 34.5,63 26,76.5 18,74.5 14,73 8.5,71.5 8.5,58.5 12.5,50" fill="#fff" stroke="#707070" stroke-width="1"/>
<polygon points="13,50 19.5,54.5 21,61 24,55 34,53 34,64 32,67 28,65 21,65 16,64 13,64" fill="#ffff00"/>
<polyline points="13,50.5 17,53 19.5,55.5 21,61.5 23,56 26,54 34,53.5" fill="none" stroke="#ff7070" stroke-width="1" shape-rendering="geometricPrecision"/>
<polyline points="13,57.5 19,59 21,62.5 24,59 33,59" fill="none" stroke="#ff8080" stroke-width="0.9" shape-rendering="geometricPrecision"/>
<path d="M9.5,71 L12,67 L13,64 M17,74 L20,69 L21,65 M24,75 L27,69 L28,65" fill="none" stroke="#ffff00" stroke-width="1.6" shape-rendering="geometricPrecision"/>
<path d="M11,72 L14,67 M15,74 L18,68 M20,75 L23,69 M26,75 L29,69 M29,72 L32,67" fill="none" stroke="#ff9090" stroke-width="0.9" shape-rendering="geometricPrecision"/>
<rect x="2" y="82" width="38" height="33" fill="#acacac"/>
<rect x="3" y="83" width="36" height="31" fill="#e1e1e1"/>
<rect x="6" y="85" width="31" height="26" fill="#ffffff"/>
<rect x="8" y="85" width="1" height="27" fill="#c8c8c8"/>
<rect x="12" y="85" width="1" height="27" fill="#c8c8c8"/>
<rect x="16" y="85" width="1" height="27" fill="#c8c8c8"/>
<rect x="19" y="85" width="1" height="27" fill="#c8c8c8"/>
<rect x="23" y="85" width="1" height="27" fill="#c8c8c8"/>
<rect x="33" y="85" width="1" height="27" fill="#c8c8c8"/>
<rect x="6" y="95" width="31" height="1" fill="#c8c8c8"/>
<rect x="6" y="103" width="31" height="1" fill="#c8c8c8"/>
<rect x="6" y="111" width="31" height="1" fill="#c8c8c8"/>
<rect x="6" y="85" width="1" height="27" fill="#888"/>
<rect x="36" y="85" width="1" height="27" fill="#888"/>
<rect x="6" y="85" width="31" height="1" fill="#888"/>
<polyline points="7,90 10,91.5 14,93 17,96 19,100 20,105 20.5,108 21,104 22,98 24,94 27,91 29,90 34,90 36,90" fill="none" stroke="#0000ff" stroke-width="1.3" shape-rendering="geometricPrecision"/>
<polyline points="7,102 11,104 15,107 19.5,110 19.5,87 21,87 24,91 28,95 31,99 33,104 35,108 36,111" fill="none" stroke="#ff0000" stroke-width="1.2" shape-rendering="geometricPrecision"/>
<rect x="2" y="115" width="38" height="39" fill="#acacac"/>
<rect x="3" y="116" width="36" height="37" fill="#e1e1e1"/>
<rect x="6" y="118" width="31" height="32" fill="#ffffff"/>
<rect x="5" y="118" width="32" height="12" fill="#c8c8c8"/>
<rect x="10" y="130" width="1" height="21" fill="#d0d0d0"/>
<rect x="13" y="130" width="1" height="21" fill="#d0d0d0"/>
<rect x="20" y="130" width="1" height="21" fill="#d0d0d0"/>
<rect x="29" y="130" width="1" height="21" fill="#d0d0d0"/>
<rect x="31" y="130" width="1" height="21" fill="#d0d0d0"/>
<rect x="6" y="135" width="31" height="1" fill="#d0d0d0"/>
<rect x="6" y="140" width="31" height="1" fill="#d0d0d0"/>
<rect x="6" y="144" width="31" height="1" fill="#d0d0d0"/>
<path d="M6.5 121.5h3v6h-3z M9.5 121.5l3-3v12l-3-3 M15 124.5h3 M18.5 122.5h13v4h-13z M31.5 124.5h3" fill="none" stroke="#400040" stroke-width="1"/>
<polyline points="6,141 8,142 10,142 12,137 13,136 15,141 16,143 18,142 20,138 21,135 23,138 25,141 27,144 29,144 31,142 34,141" fill="none" stroke="#0000ff" stroke-width="1.3" shape-rendering="geometricPrecision"/>
<rect x="7" y="149" width="28" height="1" fill="#400040"/>
<rect x="7" y="150" width="28" height="1" fill="#400040"/>
<rect x="35" y="135" width="1" height="1" fill="#ff0000"/>
<rect x="36" y="144" width="1" height="1" fill="#ff0000"/>
<rect x="36" y="146" width="1" height="1" fill="#ff0000"/>
<rect x="2" y="161" width="38" height="39" fill="#acacac"/>
<rect x="3" y="162" width="36" height="37" fill="#e1e1e1"/>
<rect x="6" y="164" width="31" height="32" fill="#ffffff"/>
<rect x="5" y="164" width="32" height="14" fill="#c8c8c8"/>
<text x="21" y="175" font-size="10.5" fill="#000" text-anchor="middle" textLength="20" lengthAdjust="spacingAndGlyphs" xml:space="preserve">TSP</text>
<rect x="9" y="178" width="1" height="17" fill="#d0d0d0"/>
<rect x="13" y="178" width="1" height="17" fill="#d0d0d0"/>
<rect x="20" y="178" width="1" height="17" fill="#d0d0d0"/>
<rect x="30" y="178" width="1" height="17" fill="#d0d0d0"/>
<rect x="32" y="178" width="1" height="17" fill="#d0d0d0"/>
<rect x="6" y="181" width="30" height="1" fill="#d0d0d0"/>
<rect x="6" y="188" width="30" height="1" fill="#d0d0d0"/>
<rect x="6" y="192" width="30" height="1" fill="#d0d0d0"/>
<rect x="5" y="177" width="1" height="17" fill="#000"/>
<rect x="6" y="195" width="29" height="1" fill="#000"/>
<rect x="6" y="196" width="29" height="1" fill="#000"/>
<polyline points="6,187 8,188 10,188 11,185 12.5,180 14,184 15,188 16,190 18,190 20,188 23,188 26,187 30,185 32,185" fill="none" stroke="#0000ff" stroke-width="1.4" shape-rendering="geometricPrecision"/>
<rect x="2" y="200" width="38" height="39" fill="#acacac"/>
<rect x="3" y="201" width="36" height="37" fill="#e1e1e1"/>
<rect x="6" y="203" width="31" height="32" fill="#ffffff"/>
<rect x="8" y="203" width="1" height="33" fill="#c8c8c8"/>
<rect x="9" y="203" width="1" height="33" fill="#c8c8c8"/>
<rect x="12" y="203" width="1" height="33" fill="#c8c8c8"/>
<rect x="25" y="203" width="1" height="33" fill="#c8c8c8"/>
<rect x="6" y="210" width="31" height="1" fill="#c8c8c8"/>
<rect x="6" y="216" width="31" height="1" fill="#c8c8c8"/>
<rect x="6" y="222" width="31" height="1" fill="#c8c8c8"/>
<rect x="6" y="228" width="31" height="1" fill="#c8c8c8"/>
<rect x="5" y="210" width="1" height="1" fill="#0000ff"/>
<rect x="5" y="216" width="1" height="1" fill="#0000ff"/>
<rect x="5" y="222" width="1" height="1" fill="#0000ff"/>
<rect x="5" y="228" width="1" height="1" fill="#0000ff"/>
<polyline points="7,231.5 10,231.5 13,229 15,227 16.5,228 16.5,204 16.5,226 18,228 20,230 21.5,229 21.5,221 21.5,230 23,230 25,229 25.5,224 25.5,229 28,229 29.5,225 29.5,229 33,229 33.5,227 33.5,229 36,229" fill="none" stroke="#0000ff" stroke-width="1.4" shape-rendering="geometricPrecision"/>
<rect x="8" y="234" width="1" height="1" fill="#0000ff"/>
<rect x="9" y="234" width="1" height="1" fill="#0000ff"/>
<rect x="12" y="234" width="1" height="1" fill="#0000ff"/>
<rect x="25" y="234" width="1" height="1" fill="#0000ff"/>
<rect x="2" y="239" width="38" height="39" fill="#acacac"/>
<rect x="3" y="240" width="36" height="37" fill="#e1e1e1"/>
<rect x="6" y="242" width="31" height="32" fill="#ffffff"/>
<rect x="8" y="242" width="1" height="33" fill="#c8c8c8"/>
<rect x="9" y="242" width="1" height="33" fill="#c8c8c8"/>
<rect x="12" y="242" width="1" height="33" fill="#c8c8c8"/>
<rect x="25" y="242" width="1" height="33" fill="#c8c8c8"/>
<rect x="6" y="249" width="31" height="1" fill="#c8c8c8"/>
<rect x="6" y="255" width="31" height="1" fill="#c8c8c8"/>
<rect x="6" y="261" width="31" height="1" fill="#c8c8c8"/>
<rect x="6" y="267" width="31" height="1" fill="#c8c8c8"/>
<polyline points="5,257 7,257 9,259 12,260 15,262 18,264 20,266 22,267 25,267.5 27,267 30,266 31,263 32,259 32,242" fill="none" stroke="#0000ff" stroke-width="1.5" shape-rendering="geometricPrecision"/>
<text x="34" y="274" font-size="9" fill="#000" font-weight="bold" text-anchor="middle" xml:space="preserve">ω</text>
<rect x="2" y="278" width="38" height="39" fill="#acacac"/>
<rect x="3" y="279" width="36" height="37" fill="#e1e1e1"/>
<rect x="6" y="281" width="31" height="32" fill="#ffffff"/>
<rect x="5" y="281" width="32" height="13" fill="#c8c8c8"/>
<rect x="10" y="294" width="1" height="20" fill="#d0d0d0"/>
<rect x="13" y="294" width="1" height="20" fill="#d0d0d0"/>
<rect x="20" y="294" width="1" height="20" fill="#d0d0d0"/>
<rect x="29" y="294" width="1" height="20" fill="#d0d0d0"/>
<rect x="31" y="294" width="1" height="20" fill="#d0d0d0"/>
<rect x="6" y="297" width="30" height="1" fill="#d0d0d0"/>
<rect x="6" y="303" width="30" height="1" fill="#d0d0d0"/>
<rect x="6" y="307" width="30" height="1" fill="#d0d0d0"/>
<path d="M6.5 284.5h3v6h-3z M9.5 284.5l3-3v12l-3-3 M17 287.5l2-3l2 3l-2 3z M19.5 285.5h13v4h-13z M33 288l2 3" fill="none" stroke="#400040" stroke-width="1"/>
<polyline points="6,308 8,305 10,302 11,298 15,297 18,297 20,300 22,303 24,306 27,309 29,310 32,311 34,312" fill="none" stroke="#0000ff" stroke-width="1.4" shape-rendering="geometricPrecision"/>
<rect x="7" y="312" width="28" height="1" fill="#400040"/>
<rect x="7" y="313" width="28" height="1" fill="#400040"/>
<rect x="35" y="298" width="1" height="1" fill="#ff0000"/>
<rect x="36" y="307" width="1" height="1" fill="#ff0000"/>
<rect x="36" y="309" width="1" height="1" fill="#ff0000"/>
<rect x="2" y="317" width="38" height="39" fill="#acacac"/>
<rect x="3" y="318" width="36" height="37" fill="#e1e1e1"/>
<rect x="6" y="320" width="31" height="32" fill="#ffffff"/>
<rect x="5" y="320" width="32" height="12" fill="#c8c8c8"/>
<path d="M6.5 324.5h3v4h-3z M9.5 324.5l2-2v8l-2-2 M24 325h1 M24 328h1 M26.5 325.5h10v2h-10z M36.5 328v3" fill="none" stroke="#400040" stroke-width="1"/>
<polygon points="15,333.5 19,334 30,334.5 34.5,336 34.5,343 29,351 22,352 15,350 9,348 8.5,342 12,336" fill="#fff" stroke="#707070" stroke-width="1"/>
<polygon points="13,336 19,338 21,343 24,338.5 34,337.5 34,343 31,345 24,345 18,345 13,344" fill="#ffff00"/>
<polyline points="13,336.5 19,338.5 21,343 24,339 34,338" fill="none" stroke="#ff8080" stroke-width="1" shape-rendering="geometricPrecision"/>
<polyline points="13,340 19,341 21,344 24,341 33,341" fill="none" stroke="#ff8080" stroke-width="0.9" shape-rendering="geometricPrecision"/>
<path d="M10,349 L14,344 M18,351 L22,345 M26,350 L30,345" fill="none" stroke="#ffff00" stroke-width="1.3" shape-rendering="geometricPrecision"/>
<rect x="2" y="356" width="38" height="39" fill="#acacac"/>
<rect x="3" y="357" width="36" height="37" fill="#e1e1e1"/>
<rect x="6" y="359" width="31" height="32" fill="#ffffff"/>
<rect x="10" y="359" width="1" height="33" fill="#dcdcdc"/>
<rect x="16" y="359" width="1" height="33" fill="#dcdcdc"/>
<rect x="22" y="359" width="1" height="33" fill="#dcdcdc"/>
<rect x="28" y="359" width="1" height="33" fill="#dcdcdc"/>
<rect x="34" y="359" width="1" height="33" fill="#dcdcdc"/>
<rect x="6" y="364" width="31" height="1" fill="#dcdcdc"/>
<rect x="6" y="370" width="31" height="1" fill="#dcdcdc"/>
<rect x="6" y="376" width="31" height="1" fill="#dcdcdc"/>
<rect x="6" y="383" width="31" height="1" fill="#dcdcdc"/>
<rect x="6" y="388" width="31" height="1" fill="#dcdcdc"/>
<polyline points="6,369 9,365 12,362 15,360 16,359 18,361 20,364 21,370 23,375 26,378 28,376 30,373 32,373 33,369 35,366" fill="none" stroke="#ff0000" stroke-width="1.2" shape-rendering="geometricPrecision"/>
<polyline points="6,375.5 16.5,375.5 16.5,388 33.5,388 33.5,375.5 36,375.5" fill="none" stroke="#0000ff" stroke-width="1.2" shape-rendering="geometricPrecision"/>
</svg></body></html>
